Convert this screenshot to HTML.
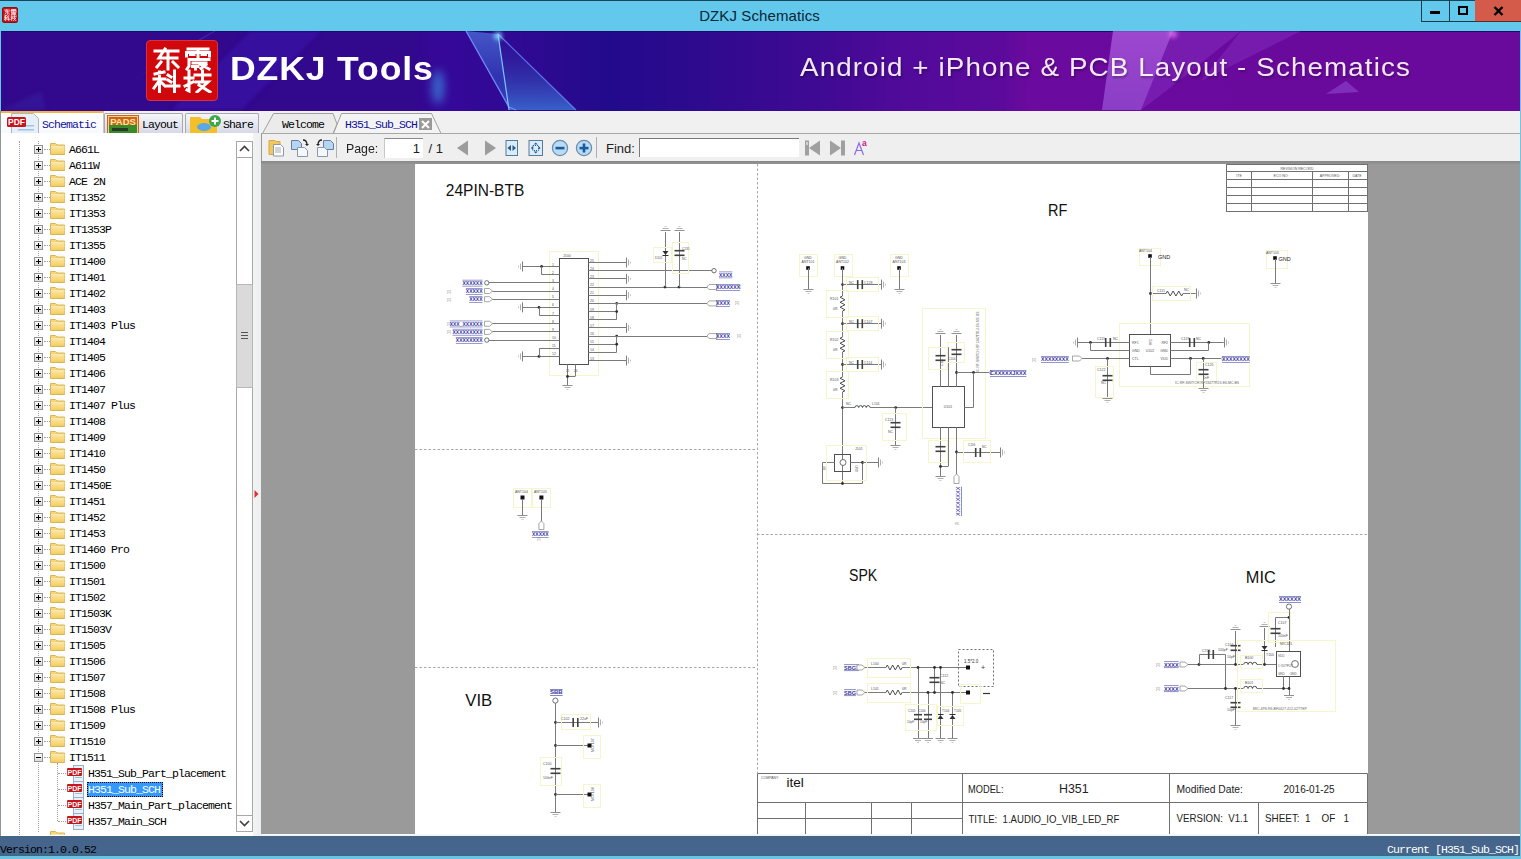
<!DOCTYPE html><html><head><meta charset="utf-8"><style>

*{box-sizing:border-box}
html,body{margin:0;padding:0}
body{width:1521px;height:859px;position:relative;overflow:hidden;background:#f0f0f0;font-family:"Liberation Sans",sans-serif}
.a{position:absolute}
.mono{font-family:"Liberation Mono",monospace}
.tt{font-family:"Liberation Mono",monospace;font-size:11.5px;letter-spacing:-0.9px;color:#000;line-height:14px;white-space:pre}
.bx{width:9px;height:9px;border:1px solid #929292;background:linear-gradient(#fafafa,#dcdcdc)}
.bx i{position:absolute;left:1px;top:3px;width:5px;height:1px;background:#000}
.bx b{position:absolute;left:3px;top:1px;width:1px;height:5px;background:#000}
.hd{width:6px;height:1px;border-top:1px dotted #a0a0a0}

</style></head><body>
<svg width="0" height="0" style="position:absolute"><defs><linearGradient id="fg" x1="0" y1="0" x2="0" y2="1"><stop offset="0" stop-color="#fbe9a8"/><stop offset="1" stop-color="#f2cd62"/></linearGradient></defs></svg>
<!-- TITLE BAR -->
<div class="a" style="left:0;top:0;width:1521px;height:31px;background:#62c8ec;border-top:1px solid #1a4556"></div>
<div class="a" style="left:2px;top:7px;width:16px;height:16px;background:#c8101a;border-radius:2px;border:1px solid #901010"></div>
<svg class="a" style="left:4px;top:9px" width="13" height="12" viewBox="0 0 62 46" preserveAspectRatio="none"><g fill="none" stroke="#fff" stroke-width="3" stroke-linecap="square" stroke-linejoin="miter">
    <g transform="translate(1,1)"><path d="M2 3H25M12 1L6 10H24M15 6V21M8 14L4 19M20 14L25 19"/></g>
    <g transform="translate(32,1)"><path d="M4 1H24M2.5 4.5V8M2.5 4.5H25.5V8M14 1V9.5M6.5 6.5H10M18 6.5H21.5M5 11.5H25M5 11.5V18L3 21M9 15H22M8.5 18.5H14M15 15.5L25 21M22 16.5L17 20.5M11.5 18.5V21"/></g>
    <g transform="translate(1,24)"><path d="M2 3L11 1M1 8H12M6.5 1V21M6 10L1 17M8 11L12 15M15 4L18 6M15 9L18 11M13 15H26M21.5 0V21"/></g>
    <g transform="translate(32,24)"><path d="M1 7H9M5 0V20L3 19M1 15L9 11M11 4H26M18.5 0V9M12 11H24L13 21M15 14L26 21"/></g>
  </g></svg>
<div class="a" style="left:-1px;top:7px;width:1521px;text-align:center;font-size:15px;color:#0c2636;line-height:18px;letter-spacing:0.1px">DZKJ Schematics</div>
<div class="a" style="left:1421px;top:0;width:29px;height:22px;border:1px solid #163a48;border-top:none;border-right:none"></div>
<div class="a" style="left:1449px;top:0;width:27px;height:22px;border:1px solid #163a48;border-top:none"></div>
<div class="a" style="left:1475px;top:0;width:46px;height:22px;background:#d45a4a;border-bottom:1px solid #5a2a22"></div>
<div class="a" style="left:1430px;top:11px;width:10px;height:3px;background:#000"></div>
<div class="a" style="left:1458px;top:6px;width:10px;height:9px;border:2px solid #000"></div>
<svg class="a" style="left:1493px;top:6px" width="11" height="10" viewBox="0 0 11 10"><path d="M1.5 1L9.5 9M9.5 1L1.5 9" stroke="#000" stroke-width="2.4"/></svg>

<!-- BANNER -->
<div class="a" style="left:1px;top:31px;width:1519px;height:80px;overflow:hidden;background:linear-gradient(90deg,#32088c 0%,#32088c 27%,#36089a 29%,#2c0a90 36%,#220a8c 40%,#2e0a8e 46%,#420a94 55%,#500a9a 59%,#5c0a9c 66%,#6a0a9e 67.5%,#6a0a9c 100%)">
  <div class="a" style="left:0;top:0;width:1519px;height:1px;background:#1e0a6a"></div>
  <svg class="a" style="left:0;top:0" width="1519" height="80" viewBox="0 0 1519 80">
    <defs>
      <filter id="bl2" x="-50%" y="-50%" width="200%" height="200%"><feGaussianBlur stdDeviation="2"/></filter>
      <filter id="bl5" x="-100%" y="-50%" width="300%" height="200%"><feGaussianBlur stdDeviation="5"/></filter>
      <linearGradient id="cg1" x1="0" y1="0" x2="0" y2="1"><stop offset="0" stop-color="#4a70d8"/><stop offset="0.6" stop-color="#3040b8"/><stop offset="1" stop-color="#3a50c8"/></linearGradient>
      <linearGradient id="cg2" x1="0" y1="0" x2="0" y2="1"><stop offset="0" stop-color="#2a1a98" stop-opacity="0.2"/><stop offset="1" stop-color="#3a6ad0"/></linearGradient>
      <linearGradient id="pg1" x1="0" y1="0" x2="0" y2="1"><stop offset="0" stop-color="#c070f0"/><stop offset="1" stop-color="#a060e0"/></linearGradient>
    </defs>
    <!-- faint streaks left -->
    <path d="M250 0 L320 0 L240 79 L170 79z" fill="#3a18b0" opacity="0.55" filter="url(#bl2)"/>
    <path d="M195 10 L213 0 L215 0 L130 50z" fill="#5a4ad0" opacity="0.4"/>
    <path d="M0 79 L40 60 L45 79z" fill="#3a30b0" opacity="0.3" filter="url(#bl2)"/>
    <!-- blue glow -->
    <ellipse cx="437" cy="56" rx="6" ry="17" fill="#3a8ae0" opacity="0.75" filter="url(#bl5)"/>
    <!-- blue crystal -->
    <path d="M465 0 L497 3 L508 78z" fill="url(#cg1)" opacity="0.75"/>
    <path d="M497 3 L508 79 L575 79z" fill="url(#cg2)" opacity="0.9"/>
    <path d="M465 0 L508 76 L515 79" fill="none" stroke="#7a90ff" stroke-width="1.3" opacity="0.9"/>
    <path d="M497 3 L508 79" stroke="#7ac8ff" stroke-width="1.2"/>
    <path d="M497 3 L575 79" stroke="#6a8aff" stroke-width="1.2" opacity="0.8"/>
    <circle cx="497" cy="5" r="4" fill="#8ae8ff" opacity="0.8" filter="url(#bl2)"/>
    <!-- purple crystal right -->
    <path d="M1112 0 L1172 0 L1140 79 L1101 79z" fill="url(#pg1)" opacity="0.6"/>
    <path d="M1172 0 L1240 0 L1165 60 L1140 79z" fill="#9040d0" opacity="0.35"/>
    <path d="M1240 0 L1300 0 L1200 50z" fill="#9a50e0" opacity="0.25"/>
    <path d="M1325 63 L1358 61 L1345 50z" fill="#9a5ae0" opacity="0.45"/>
    <circle cx="1172" cy="3" r="4" fill="#ff90ff" opacity="0.6" filter="url(#bl2)"/>
  </svg>
  <!-- logo -->
  <div class="a" style="left:145px;top:9px;width:72px;height:61px;background:#d0080c;border-radius:4px;border:1px solid #d83040"></div>
  <svg class="a" style="left:151px;top:16px" width="62" height="46" viewBox="0 0 62 46"><g fill="none" stroke="#fff" stroke-width="3" stroke-linecap="square" stroke-linejoin="miter">
    <g transform="translate(1,1)"><path d="M2 3H25M12 1L6 10H24M15 6V21M8 14L4 19M20 14L25 19"/></g>
    <g transform="translate(32,1)"><path d="M4 1H24M2.5 4.5V8M2.5 4.5H25.5V8M14 1V9.5M6.5 6.5H10M18 6.5H21.5M5 11.5H25M5 11.5V18L3 21M9 15H22M8.5 18.5H14M15 15.5L25 21M22 16.5L17 20.5M11.5 18.5V21"/></g>
    <g transform="translate(1,24)"><path d="M2 3L11 1M1 8H12M6.5 1V21M6 10L1 17M8 11L12 15M15 4L18 6M15 9L18 11M13 15H26M21.5 0V21"/></g>
    <g transform="translate(32,24)"><path d="M1 7H9M5 0V20L3 19M1 15L9 11M11 4H26M18.5 0V9M12 11H24L13 21M15 14L26 21"/></g>
  </g></svg>
  <div class="a" style="left:229px;top:18px;font-size:32.5px;font-weight:bold;color:#fff;letter-spacing:0.8px;line-height:40px;white-space:nowrap;transform:scaleX(1.094);transform-origin:0 0">DZKJ Tools</div>
  <div class="a" style="left:799px;top:21px;font-size:25px;color:rgba(255,250,255,0.93);letter-spacing:1px;line-height:30px;white-space:nowrap;text-shadow:1px 2px 2px rgba(0,0,0,0.3);transform:scaleX(1.111);transform-origin:0 0">Android + iPhone &amp; PCB Layout - Schematics</div>
</div>
<div class="a" style="left:0;top:31px;width:1px;height:80px;background:#62c8ec"></div>
<div class="a" style="left:1520px;top:31px;width:1px;height:80px;background:#62c8ec"></div>

<!-- TAB ROW -->
<div class="a" style="left:0;top:111px;width:1521px;height:22px;background:#f0f0f0;border-left:1px solid #62c8ec;border-right:1px solid #62c8ec"></div>
<!-- Schematic tab (active) -->
<div class="a" style="left:1px;top:111px;width:103px;height:24px;background:linear-gradient(#fff,#f7f8fc);border-top:2px solid #f3b443;border-right:1px solid #c8c8c8"></div>
<svg class="a" style="left:6px;top:112px" width="34" height="22" viewBox="0 0 34 22"><path d="M5.5 1.5 h22 l5 5 v15 h-27z" fill="#e6eef8" stroke="#a8b8cc"/><rect x="12" y="13" width="16" height="1.5" fill="#9cc4e8"/><rect x="12" y="17" width="16" height="1.5" fill="#9cc4e8"/><rect x="1" y="5" width="19" height="10" rx="1.5" fill="#c8141c"/><text x="10.5" y="13" font-family="Liberation Sans" font-size="8.5" font-weight="bold" fill="#fff" text-anchor="middle">PDF</text></svg>
<div class="a tt" style="left:42px;top:118px;color:#10109a">Schematic</div>
<!-- Layout tab -->
<div class="a" style="left:104px;top:113px;width:79px;height:20px;background:linear-gradient(#f6f6fa,#d6d9e8);border:1px solid #a8a8b0;border-bottom:none;border-radius:2px 2px 0 0"></div>
<svg class="a" style="left:107px;top:115px" width="32" height="18" viewBox="0 0 32 18"><rect x="0" y="0" width="32" height="18" fill="#d0621a"/><rect x="1.5" y="1.5" width="29" height="16" fill="none" stroke="#f0d090"/><rect x="2" y="10" width="28" height="8" fill="#3a8a2a"/><rect x="5" y="13" width="16" height="3" fill="#2a3a2a"/><text x="16" y="9.5" font-family="Liberation Sans" font-size="9.5" font-weight="bold" fill="#ffe8a0" text-anchor="middle">PADS</text></svg>
<div class="a tt" style="left:142px;top:118px">Layout</div>
<!-- Share tab -->
<div class="a" style="left:185px;top:113px;width:74px;height:20px;background:linear-gradient(#f6f6fa,#d6d9e8);border:1px solid #a8a8b0;border-bottom:none;border-radius:2px 2px 0 0"></div>
<svg class="a" style="left:189px;top:114px" width="34" height="19" viewBox="0 0 34 19"><path d="M1 3h10l2 2h15v14H1z" fill="#f5bf2a"/><ellipse cx="15" cy="13" rx="7" ry="4" fill="#5aa8e8"/><circle cx="26" cy="7" r="6" fill="#3aa84a"/><path d="M26 3.5v7M22.5 7h7" stroke="#fff" stroke-width="2"/></svg>
<div class="a tt" style="left:223px;top:118px">Share</div>
<!-- doc tabs -->
<svg class="a" style="left:261px;top:111px" width="200" height="23" viewBox="0 0 200 23">
  <path d="M1.5 22.5 L12.5 2.5 H72 L76 13 L72 22.5z" fill="#ebebeb" stroke="#a0a0a0"/>
  <path d="M72.5 22.5 L80.5 2.5 H170.5 L180 22.5" fill="#f4f4f4" stroke="#a0a0a0"/>
  <path d="M0 22.5 H1.5 M180 22.5 H200" stroke="#a0a0a0"/>
  <rect x="158" y="7" width="13" height="12" fill="#9a9a9a"/>
  <path d="M161 10L168 17M168 10L161 17" stroke="#fff" stroke-width="2"/>
</svg>
<div class="a tt" style="left:282px;top:118px">Welcome</div>
<div class="a tt" style="left:345px;top:118px;color:#10109a">H351_Sub_SCH</div>

<div class="a" style="left:0;top:133px;width:261px;height:703px;background:#fff;border-left:1px solid #8d8d8d"></div>
<div class="a" style="left:0;top:0;width:236px;height:835px;overflow:hidden;clip-path:inset(136px 0 0 0)">
<div class="a" style="left:19px;top:141px;width:1px;height:694px;border-left:1px dotted #a0a0a0"></div>
<div class="a" style="left:38px;top:141px;width:1px;height:691px;border-left:1px dotted #a0a0a0"></div>
<div class="a bx" style="left:34px;top:145px"><i></i><b></b></div>
<div class="a hd" style="left:44px;top:149px"></div>
<svg class="a" style="left:50px;top:142px" width="16" height="13" viewBox="0 0 16 13"><path d="M0.5 1.5 h5 l1.5 1.5 h7.5 v9.5 h-14z" fill="#f3d77a" stroke="#d9b45a" stroke-width="1"/><rect x="1" y="4" width="13.5" height="8" fill="url(#fg)"/></svg>
<div class="a tt" style="left:69px;top:143px">A661L</div>
<div class="a bx" style="left:34px;top:161px"><i></i><b></b></div>
<div class="a hd" style="left:44px;top:165px"></div>
<svg class="a" style="left:50px;top:158px" width="16" height="13" viewBox="0 0 16 13"><path d="M0.5 1.5 h5 l1.5 1.5 h7.5 v9.5 h-14z" fill="#f3d77a" stroke="#d9b45a" stroke-width="1"/><rect x="1" y="4" width="13.5" height="8" fill="url(#fg)"/></svg>
<div class="a tt" style="left:69px;top:159px">A611W</div>
<div class="a bx" style="left:34px;top:177px"><i></i><b></b></div>
<div class="a hd" style="left:44px;top:181px"></div>
<svg class="a" style="left:50px;top:174px" width="16" height="13" viewBox="0 0 16 13"><path d="M0.5 1.5 h5 l1.5 1.5 h7.5 v9.5 h-14z" fill="#f3d77a" stroke="#d9b45a" stroke-width="1"/><rect x="1" y="4" width="13.5" height="8" fill="url(#fg)"/></svg>
<div class="a tt" style="left:69px;top:175px">ACE 2N</div>
<div class="a bx" style="left:34px;top:193px"><i></i><b></b></div>
<div class="a hd" style="left:44px;top:197px"></div>
<svg class="a" style="left:50px;top:190px" width="16" height="13" viewBox="0 0 16 13"><path d="M0.5 1.5 h5 l1.5 1.5 h7.5 v9.5 h-14z" fill="#f3d77a" stroke="#d9b45a" stroke-width="1"/><rect x="1" y="4" width="13.5" height="8" fill="url(#fg)"/></svg>
<div class="a tt" style="left:69px;top:191px">IT1352</div>
<div class="a bx" style="left:34px;top:209px"><i></i><b></b></div>
<div class="a hd" style="left:44px;top:213px"></div>
<svg class="a" style="left:50px;top:206px" width="16" height="13" viewBox="0 0 16 13"><path d="M0.5 1.5 h5 l1.5 1.5 h7.5 v9.5 h-14z" fill="#f3d77a" stroke="#d9b45a" stroke-width="1"/><rect x="1" y="4" width="13.5" height="8" fill="url(#fg)"/></svg>
<div class="a tt" style="left:69px;top:207px">IT1353</div>
<div class="a bx" style="left:34px;top:225px"><i></i><b></b></div>
<div class="a hd" style="left:44px;top:229px"></div>
<svg class="a" style="left:50px;top:222px" width="16" height="13" viewBox="0 0 16 13"><path d="M0.5 1.5 h5 l1.5 1.5 h7.5 v9.5 h-14z" fill="#f3d77a" stroke="#d9b45a" stroke-width="1"/><rect x="1" y="4" width="13.5" height="8" fill="url(#fg)"/></svg>
<div class="a tt" style="left:69px;top:223px">IT1353P</div>
<div class="a bx" style="left:34px;top:241px"><i></i><b></b></div>
<div class="a hd" style="left:44px;top:245px"></div>
<svg class="a" style="left:50px;top:238px" width="16" height="13" viewBox="0 0 16 13"><path d="M0.5 1.5 h5 l1.5 1.5 h7.5 v9.5 h-14z" fill="#f3d77a" stroke="#d9b45a" stroke-width="1"/><rect x="1" y="4" width="13.5" height="8" fill="url(#fg)"/></svg>
<div class="a tt" style="left:69px;top:239px">IT1355</div>
<div class="a bx" style="left:34px;top:257px"><i></i><b></b></div>
<div class="a hd" style="left:44px;top:261px"></div>
<svg class="a" style="left:50px;top:254px" width="16" height="13" viewBox="0 0 16 13"><path d="M0.5 1.5 h5 l1.5 1.5 h7.5 v9.5 h-14z" fill="#f3d77a" stroke="#d9b45a" stroke-width="1"/><rect x="1" y="4" width="13.5" height="8" fill="url(#fg)"/></svg>
<div class="a tt" style="left:69px;top:255px">IT1400</div>
<div class="a bx" style="left:34px;top:273px"><i></i><b></b></div>
<div class="a hd" style="left:44px;top:277px"></div>
<svg class="a" style="left:50px;top:270px" width="16" height="13" viewBox="0 0 16 13"><path d="M0.5 1.5 h5 l1.5 1.5 h7.5 v9.5 h-14z" fill="#f3d77a" stroke="#d9b45a" stroke-width="1"/><rect x="1" y="4" width="13.5" height="8" fill="url(#fg)"/></svg>
<div class="a tt" style="left:69px;top:271px">IT1401</div>
<div class="a bx" style="left:34px;top:289px"><i></i><b></b></div>
<div class="a hd" style="left:44px;top:293px"></div>
<svg class="a" style="left:50px;top:286px" width="16" height="13" viewBox="0 0 16 13"><path d="M0.5 1.5 h5 l1.5 1.5 h7.5 v9.5 h-14z" fill="#f3d77a" stroke="#d9b45a" stroke-width="1"/><rect x="1" y="4" width="13.5" height="8" fill="url(#fg)"/></svg>
<div class="a tt" style="left:69px;top:287px">IT1402</div>
<div class="a bx" style="left:34px;top:305px"><i></i><b></b></div>
<div class="a hd" style="left:44px;top:309px"></div>
<svg class="a" style="left:50px;top:302px" width="16" height="13" viewBox="0 0 16 13"><path d="M0.5 1.5 h5 l1.5 1.5 h7.5 v9.5 h-14z" fill="#f3d77a" stroke="#d9b45a" stroke-width="1"/><rect x="1" y="4" width="13.5" height="8" fill="url(#fg)"/></svg>
<div class="a tt" style="left:69px;top:303px">IT1403</div>
<div class="a bx" style="left:34px;top:321px"><i></i><b></b></div>
<div class="a hd" style="left:44px;top:325px"></div>
<svg class="a" style="left:50px;top:318px" width="16" height="13" viewBox="0 0 16 13"><path d="M0.5 1.5 h5 l1.5 1.5 h7.5 v9.5 h-14z" fill="#f3d77a" stroke="#d9b45a" stroke-width="1"/><rect x="1" y="4" width="13.5" height="8" fill="url(#fg)"/></svg>
<div class="a tt" style="left:69px;top:319px">IT1403 Plus</div>
<div class="a bx" style="left:34px;top:337px"><i></i><b></b></div>
<div class="a hd" style="left:44px;top:341px"></div>
<svg class="a" style="left:50px;top:334px" width="16" height="13" viewBox="0 0 16 13"><path d="M0.5 1.5 h5 l1.5 1.5 h7.5 v9.5 h-14z" fill="#f3d77a" stroke="#d9b45a" stroke-width="1"/><rect x="1" y="4" width="13.5" height="8" fill="url(#fg)"/></svg>
<div class="a tt" style="left:69px;top:335px">IT1404</div>
<div class="a bx" style="left:34px;top:353px"><i></i><b></b></div>
<div class="a hd" style="left:44px;top:357px"></div>
<svg class="a" style="left:50px;top:350px" width="16" height="13" viewBox="0 0 16 13"><path d="M0.5 1.5 h5 l1.5 1.5 h7.5 v9.5 h-14z" fill="#f3d77a" stroke="#d9b45a" stroke-width="1"/><rect x="1" y="4" width="13.5" height="8" fill="url(#fg)"/></svg>
<div class="a tt" style="left:69px;top:351px">IT1405</div>
<div class="a bx" style="left:34px;top:369px"><i></i><b></b></div>
<div class="a hd" style="left:44px;top:373px"></div>
<svg class="a" style="left:50px;top:366px" width="16" height="13" viewBox="0 0 16 13"><path d="M0.5 1.5 h5 l1.5 1.5 h7.5 v9.5 h-14z" fill="#f3d77a" stroke="#d9b45a" stroke-width="1"/><rect x="1" y="4" width="13.5" height="8" fill="url(#fg)"/></svg>
<div class="a tt" style="left:69px;top:367px">IT1406</div>
<div class="a bx" style="left:34px;top:385px"><i></i><b></b></div>
<div class="a hd" style="left:44px;top:389px"></div>
<svg class="a" style="left:50px;top:382px" width="16" height="13" viewBox="0 0 16 13"><path d="M0.5 1.5 h5 l1.5 1.5 h7.5 v9.5 h-14z" fill="#f3d77a" stroke="#d9b45a" stroke-width="1"/><rect x="1" y="4" width="13.5" height="8" fill="url(#fg)"/></svg>
<div class="a tt" style="left:69px;top:383px">IT1407</div>
<div class="a bx" style="left:34px;top:401px"><i></i><b></b></div>
<div class="a hd" style="left:44px;top:405px"></div>
<svg class="a" style="left:50px;top:398px" width="16" height="13" viewBox="0 0 16 13"><path d="M0.5 1.5 h5 l1.5 1.5 h7.5 v9.5 h-14z" fill="#f3d77a" stroke="#d9b45a" stroke-width="1"/><rect x="1" y="4" width="13.5" height="8" fill="url(#fg)"/></svg>
<div class="a tt" style="left:69px;top:399px">IT1407 Plus</div>
<div class="a bx" style="left:34px;top:417px"><i></i><b></b></div>
<div class="a hd" style="left:44px;top:421px"></div>
<svg class="a" style="left:50px;top:414px" width="16" height="13" viewBox="0 0 16 13"><path d="M0.5 1.5 h5 l1.5 1.5 h7.5 v9.5 h-14z" fill="#f3d77a" stroke="#d9b45a" stroke-width="1"/><rect x="1" y="4" width="13.5" height="8" fill="url(#fg)"/></svg>
<div class="a tt" style="left:69px;top:415px">IT1408</div>
<div class="a bx" style="left:34px;top:433px"><i></i><b></b></div>
<div class="a hd" style="left:44px;top:437px"></div>
<svg class="a" style="left:50px;top:430px" width="16" height="13" viewBox="0 0 16 13"><path d="M0.5 1.5 h5 l1.5 1.5 h7.5 v9.5 h-14z" fill="#f3d77a" stroke="#d9b45a" stroke-width="1"/><rect x="1" y="4" width="13.5" height="8" fill="url(#fg)"/></svg>
<div class="a tt" style="left:69px;top:431px">IT1409</div>
<div class="a bx" style="left:34px;top:449px"><i></i><b></b></div>
<div class="a hd" style="left:44px;top:453px"></div>
<svg class="a" style="left:50px;top:446px" width="16" height="13" viewBox="0 0 16 13"><path d="M0.5 1.5 h5 l1.5 1.5 h7.5 v9.5 h-14z" fill="#f3d77a" stroke="#d9b45a" stroke-width="1"/><rect x="1" y="4" width="13.5" height="8" fill="url(#fg)"/></svg>
<div class="a tt" style="left:69px;top:447px">IT1410</div>
<div class="a bx" style="left:34px;top:465px"><i></i><b></b></div>
<div class="a hd" style="left:44px;top:469px"></div>
<svg class="a" style="left:50px;top:462px" width="16" height="13" viewBox="0 0 16 13"><path d="M0.5 1.5 h5 l1.5 1.5 h7.5 v9.5 h-14z" fill="#f3d77a" stroke="#d9b45a" stroke-width="1"/><rect x="1" y="4" width="13.5" height="8" fill="url(#fg)"/></svg>
<div class="a tt" style="left:69px;top:463px">IT1450</div>
<div class="a bx" style="left:34px;top:481px"><i></i><b></b></div>
<div class="a hd" style="left:44px;top:485px"></div>
<svg class="a" style="left:50px;top:478px" width="16" height="13" viewBox="0 0 16 13"><path d="M0.5 1.5 h5 l1.5 1.5 h7.5 v9.5 h-14z" fill="#f3d77a" stroke="#d9b45a" stroke-width="1"/><rect x="1" y="4" width="13.5" height="8" fill="url(#fg)"/></svg>
<div class="a tt" style="left:69px;top:479px">IT1450E</div>
<div class="a bx" style="left:34px;top:497px"><i></i><b></b></div>
<div class="a hd" style="left:44px;top:501px"></div>
<svg class="a" style="left:50px;top:494px" width="16" height="13" viewBox="0 0 16 13"><path d="M0.5 1.5 h5 l1.5 1.5 h7.5 v9.5 h-14z" fill="#f3d77a" stroke="#d9b45a" stroke-width="1"/><rect x="1" y="4" width="13.5" height="8" fill="url(#fg)"/></svg>
<div class="a tt" style="left:69px;top:495px">IT1451</div>
<div class="a bx" style="left:34px;top:513px"><i></i><b></b></div>
<div class="a hd" style="left:44px;top:517px"></div>
<svg class="a" style="left:50px;top:510px" width="16" height="13" viewBox="0 0 16 13"><path d="M0.5 1.5 h5 l1.5 1.5 h7.5 v9.5 h-14z" fill="#f3d77a" stroke="#d9b45a" stroke-width="1"/><rect x="1" y="4" width="13.5" height="8" fill="url(#fg)"/></svg>
<div class="a tt" style="left:69px;top:511px">IT1452</div>
<div class="a bx" style="left:34px;top:529px"><i></i><b></b></div>
<div class="a hd" style="left:44px;top:533px"></div>
<svg class="a" style="left:50px;top:526px" width="16" height="13" viewBox="0 0 16 13"><path d="M0.5 1.5 h5 l1.5 1.5 h7.5 v9.5 h-14z" fill="#f3d77a" stroke="#d9b45a" stroke-width="1"/><rect x="1" y="4" width="13.5" height="8" fill="url(#fg)"/></svg>
<div class="a tt" style="left:69px;top:527px">IT1453</div>
<div class="a bx" style="left:34px;top:545px"><i></i><b></b></div>
<div class="a hd" style="left:44px;top:549px"></div>
<svg class="a" style="left:50px;top:542px" width="16" height="13" viewBox="0 0 16 13"><path d="M0.5 1.5 h5 l1.5 1.5 h7.5 v9.5 h-14z" fill="#f3d77a" stroke="#d9b45a" stroke-width="1"/><rect x="1" y="4" width="13.5" height="8" fill="url(#fg)"/></svg>
<div class="a tt" style="left:69px;top:543px">IT1460 Pro</div>
<div class="a bx" style="left:34px;top:561px"><i></i><b></b></div>
<div class="a hd" style="left:44px;top:565px"></div>
<svg class="a" style="left:50px;top:558px" width="16" height="13" viewBox="0 0 16 13"><path d="M0.5 1.5 h5 l1.5 1.5 h7.5 v9.5 h-14z" fill="#f3d77a" stroke="#d9b45a" stroke-width="1"/><rect x="1" y="4" width="13.5" height="8" fill="url(#fg)"/></svg>
<div class="a tt" style="left:69px;top:559px">IT1500</div>
<div class="a bx" style="left:34px;top:577px"><i></i><b></b></div>
<div class="a hd" style="left:44px;top:581px"></div>
<svg class="a" style="left:50px;top:574px" width="16" height="13" viewBox="0 0 16 13"><path d="M0.5 1.5 h5 l1.5 1.5 h7.5 v9.5 h-14z" fill="#f3d77a" stroke="#d9b45a" stroke-width="1"/><rect x="1" y="4" width="13.5" height="8" fill="url(#fg)"/></svg>
<div class="a tt" style="left:69px;top:575px">IT1501</div>
<div class="a bx" style="left:34px;top:593px"><i></i><b></b></div>
<div class="a hd" style="left:44px;top:597px"></div>
<svg class="a" style="left:50px;top:590px" width="16" height="13" viewBox="0 0 16 13"><path d="M0.5 1.5 h5 l1.5 1.5 h7.5 v9.5 h-14z" fill="#f3d77a" stroke="#d9b45a" stroke-width="1"/><rect x="1" y="4" width="13.5" height="8" fill="url(#fg)"/></svg>
<div class="a tt" style="left:69px;top:591px">IT1502</div>
<div class="a bx" style="left:34px;top:609px"><i></i><b></b></div>
<div class="a hd" style="left:44px;top:613px"></div>
<svg class="a" style="left:50px;top:606px" width="16" height="13" viewBox="0 0 16 13"><path d="M0.5 1.5 h5 l1.5 1.5 h7.5 v9.5 h-14z" fill="#f3d77a" stroke="#d9b45a" stroke-width="1"/><rect x="1" y="4" width="13.5" height="8" fill="url(#fg)"/></svg>
<div class="a tt" style="left:69px;top:607px">IT1503K</div>
<div class="a bx" style="left:34px;top:625px"><i></i><b></b></div>
<div class="a hd" style="left:44px;top:629px"></div>
<svg class="a" style="left:50px;top:622px" width="16" height="13" viewBox="0 0 16 13"><path d="M0.5 1.5 h5 l1.5 1.5 h7.5 v9.5 h-14z" fill="#f3d77a" stroke="#d9b45a" stroke-width="1"/><rect x="1" y="4" width="13.5" height="8" fill="url(#fg)"/></svg>
<div class="a tt" style="left:69px;top:623px">IT1503V</div>
<div class="a bx" style="left:34px;top:641px"><i></i><b></b></div>
<div class="a hd" style="left:44px;top:645px"></div>
<svg class="a" style="left:50px;top:638px" width="16" height="13" viewBox="0 0 16 13"><path d="M0.5 1.5 h5 l1.5 1.5 h7.5 v9.5 h-14z" fill="#f3d77a" stroke="#d9b45a" stroke-width="1"/><rect x="1" y="4" width="13.5" height="8" fill="url(#fg)"/></svg>
<div class="a tt" style="left:69px;top:639px">IT1505</div>
<div class="a bx" style="left:34px;top:657px"><i></i><b></b></div>
<div class="a hd" style="left:44px;top:661px"></div>
<svg class="a" style="left:50px;top:654px" width="16" height="13" viewBox="0 0 16 13"><path d="M0.5 1.5 h5 l1.5 1.5 h7.5 v9.5 h-14z" fill="#f3d77a" stroke="#d9b45a" stroke-width="1"/><rect x="1" y="4" width="13.5" height="8" fill="url(#fg)"/></svg>
<div class="a tt" style="left:69px;top:655px">IT1506</div>
<div class="a bx" style="left:34px;top:673px"><i></i><b></b></div>
<div class="a hd" style="left:44px;top:677px"></div>
<svg class="a" style="left:50px;top:670px" width="16" height="13" viewBox="0 0 16 13"><path d="M0.5 1.5 h5 l1.5 1.5 h7.5 v9.5 h-14z" fill="#f3d77a" stroke="#d9b45a" stroke-width="1"/><rect x="1" y="4" width="13.5" height="8" fill="url(#fg)"/></svg>
<div class="a tt" style="left:69px;top:671px">IT1507</div>
<div class="a bx" style="left:34px;top:689px"><i></i><b></b></div>
<div class="a hd" style="left:44px;top:693px"></div>
<svg class="a" style="left:50px;top:686px" width="16" height="13" viewBox="0 0 16 13"><path d="M0.5 1.5 h5 l1.5 1.5 h7.5 v9.5 h-14z" fill="#f3d77a" stroke="#d9b45a" stroke-width="1"/><rect x="1" y="4" width="13.5" height="8" fill="url(#fg)"/></svg>
<div class="a tt" style="left:69px;top:687px">IT1508</div>
<div class="a bx" style="left:34px;top:705px"><i></i><b></b></div>
<div class="a hd" style="left:44px;top:709px"></div>
<svg class="a" style="left:50px;top:702px" width="16" height="13" viewBox="0 0 16 13"><path d="M0.5 1.5 h5 l1.5 1.5 h7.5 v9.5 h-14z" fill="#f3d77a" stroke="#d9b45a" stroke-width="1"/><rect x="1" y="4" width="13.5" height="8" fill="url(#fg)"/></svg>
<div class="a tt" style="left:69px;top:703px">IT1508 Plus</div>
<div class="a bx" style="left:34px;top:721px"><i></i><b></b></div>
<div class="a hd" style="left:44px;top:725px"></div>
<svg class="a" style="left:50px;top:718px" width="16" height="13" viewBox="0 0 16 13"><path d="M0.5 1.5 h5 l1.5 1.5 h7.5 v9.5 h-14z" fill="#f3d77a" stroke="#d9b45a" stroke-width="1"/><rect x="1" y="4" width="13.5" height="8" fill="url(#fg)"/></svg>
<div class="a tt" style="left:69px;top:719px">IT1509</div>
<div class="a bx" style="left:34px;top:737px"><i></i><b></b></div>
<div class="a hd" style="left:44px;top:741px"></div>
<svg class="a" style="left:50px;top:734px" width="16" height="13" viewBox="0 0 16 13"><path d="M0.5 1.5 h5 l1.5 1.5 h7.5 v9.5 h-14z" fill="#f3d77a" stroke="#d9b45a" stroke-width="1"/><rect x="1" y="4" width="13.5" height="8" fill="url(#fg)"/></svg>
<div class="a tt" style="left:69px;top:735px">IT1510</div>
<div class="a bx" style="left:34px;top:753px"><i></i></div>
<div class="a hd" style="left:44px;top:757px"></div>
<svg class="a" style="left:50px;top:750px" width="16" height="13" viewBox="0 0 16 13"><path d="M0.5 1.5 h5 l1.5 1.5 h7.5 v9.5 h-14z" fill="#f3d77a" stroke="#d9b45a" stroke-width="1"/><rect x="1" y="4" width="13.5" height="8" fill="url(#fg)"/></svg>
<div class="a tt" style="left:69px;top:751px">IT1511</div>
<div class="a" style="left:57px;top:763px;width:1px;height:58px;border-left:1px dotted #a0a0a0"></div>
<div class="a hd" style="left:58px;top:773px;width:10px"></div>
<svg class="a" style="left:67px;top:765px" width="20" height="17" viewBox="0 0 20 17"><rect x="6.5" y="0.5" width="10" height="16" fill="#e8f0f8" stroke="#9ab0c8"/><rect x="8" y="9" width="7" height="1" fill="#9cc0e0"/><rect x="8" y="12" width="7" height="1" fill="#9cc0e0"/><rect x="0" y="3" width="15" height="8" rx="1" fill="#c8141c"/><text x="7.5" y="9.6" font-family="Liberation Sans" font-size="7" font-weight="bold" fill="#fff" text-anchor="middle">PDF</text></svg>
<div class="a tt" style="left:88px;top:767px">H351_Sub_Part_placement</div>
<div class="a hd" style="left:58px;top:789px;width:10px"></div>
<svg class="a" style="left:67px;top:781px" width="20" height="17" viewBox="0 0 20 17"><rect x="6.5" y="0.5" width="10" height="16" fill="#e8f0f8" stroke="#9ab0c8"/><rect x="8" y="9" width="7" height="1" fill="#9cc0e0"/><rect x="8" y="12" width="7" height="1" fill="#9cc0e0"/><rect x="0" y="3" width="15" height="8" rx="1" fill="#c8141c"/><text x="7.5" y="9.6" font-family="Liberation Sans" font-size="7" font-weight="bold" fill="#fff" text-anchor="middle">PDF</text></svg>
<div class="a" style="left:87px;top:782px;width:76px;height:15px;background:#3399ff;border:1px dotted #000"></div>
<div class="a tt" style="left:88px;top:783px;color:#fff">H351_Sub_SCH</div>
<div class="a hd" style="left:58px;top:805px;width:10px"></div>
<svg class="a" style="left:67px;top:797px" width="20" height="17" viewBox="0 0 20 17"><rect x="6.5" y="0.5" width="10" height="16" fill="#e8f0f8" stroke="#9ab0c8"/><rect x="8" y="9" width="7" height="1" fill="#9cc0e0"/><rect x="8" y="12" width="7" height="1" fill="#9cc0e0"/><rect x="0" y="3" width="15" height="8" rx="1" fill="#c8141c"/><text x="7.5" y="9.6" font-family="Liberation Sans" font-size="7" font-weight="bold" fill="#fff" text-anchor="middle">PDF</text></svg>
<div class="a tt" style="left:88px;top:799px">H357_Main_Part_placement</div>
<div class="a hd" style="left:58px;top:821px;width:10px"></div>
<svg class="a" style="left:67px;top:813px" width="20" height="17" viewBox="0 0 20 17"><rect x="6.5" y="0.5" width="10" height="16" fill="#e8f0f8" stroke="#9ab0c8"/><rect x="8" y="9" width="7" height="1" fill="#9cc0e0"/><rect x="8" y="12" width="7" height="1" fill="#9cc0e0"/><rect x="0" y="3" width="15" height="8" rx="1" fill="#c8141c"/><text x="7.5" y="9.6" font-family="Liberation Sans" font-size="7" font-weight="bold" fill="#fff" text-anchor="middle">PDF</text></svg>
<div class="a tt" style="left:88px;top:815px">H357_Main_SCH</div>
<svg class="a" style="left:50px;top:830px" width="16" height="13" viewBox="0 0 16 13"><path d="M0.5 1.5 h5 l1.5 1.5 h7.5 v9.5 h-14z" fill="#f3d77a" stroke="#d9b45a" stroke-width="1"/><rect x="1" y="4" width="13.5" height="8" fill="url(#fg)"/></svg>
</div>
<!-- left panel scrollbar -->
<div class="a" style="left:236px;top:141px;width:17px;height:691px;background:#fff;border:1px solid #a8a8a8"></div>
<div class="a" style="left:236px;top:141px;width:17px;height:17px;border-bottom:1px solid #a8a8a8"></div>
<svg class="a" style="left:238px;top:144px" width="13" height="10" viewBox="0 0 13 10"><path d="M2 7L6.5 2.5L11 7" fill="none" stroke="#404040" stroke-width="1.6"/></svg>
<div class="a" style="left:236px;top:284px;width:17px;height:104px;background:#dadada;border:1px solid #b8b8b8"></div>
<div class="a" style="left:241px;top:332px;width:7px;height:1px;background:#555"></div>
<div class="a" style="left:241px;top:335px;width:7px;height:1px;background:#555"></div>
<div class="a" style="left:241px;top:338px;width:7px;height:1px;background:#555"></div>
<div class="a" style="left:236px;top:815px;width:17px;height:17px;border-top:1px solid #a8a8a8"></div>
<svg class="a" style="left:238px;top:818px" width="13" height="10" viewBox="0 0 13 10"><path d="M2 3L6.5 7.5L11 3" fill="none" stroke="#404040" stroke-width="1.6"/></svg>
<!-- splitter strip -->
<div class="a" style="left:253px;top:133px;width:8px;height:703px;background:linear-gradient(90deg,#f2f3f4,#eceef0)"></div>
<svg class="a" style="left:254px;top:489px" width="5" height="10" viewBox="0 0 5 10"><path d="M0.5 1L4.5 5L0.5 9z" fill="#e03030"/></svg>

<!-- doc toolbar -->
<div class="a" style="left:261px;top:133px;width:1260px;height:28px;background:#efeff0;border-left:1px solid #9a9a9a;border-top:1px solid #a8a8a8"></div>
<!-- icons -->
<svg class="a" style="left:268px;top:139px" width="18" height="18" viewBox="0 0 18 18"><path d="M1 1.5h6l1 1h4v13H1z" fill="#f0c860" stroke="#d8a840"/><path d="M5.5 5.5h7l3 3v8.5h-10z" fill="#fff" stroke="#8898b0"/><path d="M7 9h6M7 11h6M7 13h6" stroke="#a0aab8"/></svg>
<svg class="a" style="left:291px;top:138px" width="19" height="19" viewBox="0 0 19 19"><path d="M0.5 2.5h7l3 3v6h-10z" fill="#b8d4f0" stroke="#6080a8"/><path d="M6.5 9.5h7l3 3v6h-10z" fill="#f4f8fc" stroke="#8898b0"/><path d="M12 2 q4 0 4 5" fill="none" stroke="#202020" stroke-width="1.3"/><path d="M14 6l2 2 2-2" fill="#202020"/></svg>
<svg class="a" style="left:315px;top:138px" width="19" height="19" viewBox="0 0 19 19"><path d="M8.5 2.5h7l3 3v6h-10z" fill="#b8d4f0" stroke="#6080a8"/><path d="M2.5 9.5h7l3 3v6h-10z" fill="#f4f8fc" stroke="#8898b0"/><path d="M7 2 q-4 0 -4 5" fill="none" stroke="#202020" stroke-width="1.3"/><path d="M1 6l2 2 2-2" fill="#202020"/></svg>
<div class="a" style="left:336px;top:137px;width:1px;height:21px;background:#b0b0b0"></div>
<div class="a" style="left:346px;top:140px;font-size:13px;color:#222;line-height:18px;transform:scaleX(0.95);transform-origin:0 0">Page:</div>
<div class="a" style="left:384px;top:138px;width:39px;height:20px;background:#fff;border-top:1px solid #8a8a8a;border-left:1px solid #c8c8c8"></div>
<div class="a" style="left:384px;top:140px;width:36px;text-align:right;font-size:13px;color:#222;line-height:18px">1</div>
<div class="a" style="left:428.5px;top:140px;font-size:13px;color:#222;line-height:18px">/ 1</div>
<svg class="a" style="left:456px;top:139px" width="14" height="18" viewBox="0 0 14 18"><path d="M12 1.5V16.5L1 9z" fill="#9c9c9c"/></svg>
<svg class="a" style="left:483px;top:139px" width="14" height="18" viewBox="0 0 14 18"><path d="M2 1.5V16.5L13 9z" fill="#9c9c9c"/></svg>
<svg class="a" style="left:505px;top:139px" width="14" height="18" viewBox="0 0 14 18"><rect x="1" y="1.5" width="11.5" height="15" fill="#d8ecfa" stroke="#5a7a9a"/><path d="M2.5 9L6 6v6zM11 9L7.5 6v6z" fill="#2a5a8a"/></svg>
<svg class="a" style="left:528px;top:139px" width="16" height="18" viewBox="0 0 16 18"><rect x="1" y="1.5" width="13.5" height="15" fill="#d8ecfa" stroke="#5a7a9a"/><path d="M7.75 3.5l2 2h-4zM7.75 14.5l2-2h-4zM3 9l2 2v-4zM12.5 9l-2 2v-4z" fill="#2a5a8a"/><rect x="5" y="6.5" width="5.5" height="5" fill="none" stroke="#2a5a8a" stroke-dasharray="1 1"/></svg>
<svg class="a" style="left:551px;top:139px" width="18" height="18" viewBox="0 0 18 18"><circle cx="9" cy="9" r="7.6" fill="#b8dcf6" stroke="#6a8aa8" stroke-width="1.2"/><rect x="4.5" y="7.8" width="9" height="2.6" fill="#1a5aa0"/></svg>
<svg class="a" style="left:575px;top:139px" width="18" height="18" viewBox="0 0 18 18"><circle cx="9" cy="9" r="7.6" fill="#b8dcf6" stroke="#6a8aa8" stroke-width="1.2"/><rect x="4.5" y="7.8" width="9" height="2.6" fill="#1a5aa0"/><rect x="7.7" y="4.5" width="2.6" height="9" fill="#1a5aa0"/></svg>
<div class="a" style="left:596px;top:137px;width:1px;height:21px;background:#b0b0b0"></div>
<div class="a" style="left:606px;top:140px;font-size:13px;color:#222;line-height:18px">Find:</div>
<div class="a" style="left:639px;top:138px;width:160px;height:19px;background:#fff;border-top:1px solid #7a7a7a;border-left:1px solid #7a7a7a"></div>
<svg class="a" style="left:804px;top:139px" width="17" height="18" viewBox="0 0 17 18"><path d="M1 1.5h4v15H1zM5 9L16 1.5v15z" fill="#a0a0a0"/><path d="M3 3v3" stroke="#fff" stroke-width="1"/></svg>
<svg class="a" style="left:829px;top:139px" width="17" height="18" viewBox="0 0 17 18"><path d="M16 1.5h-4v15h4zM12 9L1 1.5v15z" fill="#a0a0a0"/></svg>
<svg class="a" style="left:853px;top:138px" width="16" height="19" viewBox="0 0 16 19"><path d="M1.5 17L6 5l4.5 12M3.2 12.5h5.6" fill="none" stroke="#8a6ae8" stroke-width="1.2"/><text x="9" y="8" font-family="Liberation Sans" font-size="8.5" font-weight="bold" fill="#d02080">a</text></svg>



<div class="a" style="left:261px;top:161px;width:1260px;height:673px;background:#9a9a9a"></div>
<div class="a" style="left:261px;top:161px;width:1260px;height:3px;background:linear-gradient(#888,#8e8e8e 60%,#959595)"></div>
<div class="a" style="left:262px;top:834px;width:1259px;height:2px;background:linear-gradient(#fbfbfd,#e6f2fb)"></div>
<div class="a" style="left:415px;top:164px;width:953px;height:670px;background:#fff"></div>

<div class="a" style="left:415px;top:164px;width:953px;height:670px;overflow:hidden"><div class="a" style="left:-415px;top:-164px;width:1521px;height:859px"><svg class="a" style="left:0;top:0" width="1521" height="859" viewBox="0 0 1521 859"><line x1="757.5" y1="164" x2="757.5" y2="773" stroke="#a8a8a8" stroke-width="1" stroke-dasharray="2.5 2"/>
<line x1="415" y1="449.5" x2="757" y2="449.5" stroke="#a8a8a8" stroke-width="1" stroke-dasharray="2.5 2"/>
<line x1="415" y1="667.5" x2="757" y2="667.5" stroke="#a8a8a8" stroke-width="1" stroke-dasharray="2.5 2"/>
<line x1="757" y1="534.5" x2="1367" y2="534.5" stroke="#a8a8a8" stroke-width="1" stroke-dasharray="2.5 2"/>
<text x="0" y="0" font-size="16" fill="#111" font-family="Liberation Sans" transform="translate(445.8 195.7) scale(0.97 1)">24PIN-BTB</text>
<text x="0" y="0" font-size="16.3" fill="#111" font-family="Liberation Sans" transform="translate(1048 215.9) scale(0.89 1)">RF</text>
<text x="0" y="0" font-size="16.6" fill="#111" font-family="Liberation Sans" transform="translate(849 581) scale(0.85 1)">SPK</text>
<text x="0" y="0" font-size="16.5" fill="#111" font-family="Liberation Sans" transform="translate(1245.8 582.5) scale(0.99 1)">MIC</text>
<text x="0" y="0" font-size="15.8" fill="#111" font-family="Liberation Sans" transform="translate(465.3 705.5) scale(1.06 1)">VIB</text>
<rect x="549.5" y="251.5" width="49.0" height="124.0" fill="none" stroke="#f6f6cc" stroke-width="1" />
<rect x="559.5" y="258.5" width="29.0" height="106.0" fill="none" stroke="#505050" stroke-width="1" />
<text x="563" y="257" font-size="3.5" fill="#555" text-anchor="start" font-family="Liberation Sans" >J100</text>
<line x1="549" y1="266.5" x2="559.5" y2="266.5" stroke="#7a7a7a" stroke-width="1" />
<text x="552" y="265.5" font-size="3.5" fill="#555" text-anchor="start" font-family="Liberation Sans" >1</text>
<line x1="549" y1="274.5" x2="559.5" y2="274.5" stroke="#7a7a7a" stroke-width="1" />
<text x="552" y="273.675" font-size="3.5" fill="#555" text-anchor="start" font-family="Liberation Sans" >2</text>
<line x1="549" y1="282.5" x2="559.5" y2="282.5" stroke="#7a7a7a" stroke-width="1" />
<text x="552" y="281.85" font-size="3.5" fill="#555" text-anchor="start" font-family="Liberation Sans" >3</text>
<line x1="549" y1="291.5" x2="559.5" y2="291.5" stroke="#7a7a7a" stroke-width="1" />
<text x="552" y="290.025" font-size="3.5" fill="#555" text-anchor="start" font-family="Liberation Sans" >4</text>
<line x1="549" y1="299.5" x2="559.5" y2="299.5" stroke="#7a7a7a" stroke-width="1" />
<text x="552" y="298.2" font-size="3.5" fill="#555" text-anchor="start" font-family="Liberation Sans" >5</text>
<line x1="549" y1="307.5" x2="559.5" y2="307.5" stroke="#7a7a7a" stroke-width="1" />
<text x="552" y="306.375" font-size="3.5" fill="#555" text-anchor="start" font-family="Liberation Sans" >6</text>
<line x1="549" y1="315.5" x2="559.5" y2="315.5" stroke="#7a7a7a" stroke-width="1" />
<text x="552" y="314.55" font-size="3.5" fill="#555" text-anchor="start" font-family="Liberation Sans" >7</text>
<line x1="549" y1="323.5" x2="559.5" y2="323.5" stroke="#7a7a7a" stroke-width="1" />
<text x="552" y="322.725" font-size="3.5" fill="#555" text-anchor="start" font-family="Liberation Sans" >8</text>
<line x1="549" y1="331.5" x2="559.5" y2="331.5" stroke="#7a7a7a" stroke-width="1" />
<text x="552" y="330.9" font-size="3.5" fill="#555" text-anchor="start" font-family="Liberation Sans" >9</text>
<line x1="549" y1="340.5" x2="559.5" y2="340.5" stroke="#7a7a7a" stroke-width="1" />
<text x="552" y="339.075" font-size="3.5" fill="#555" text-anchor="start" font-family="Liberation Sans" >10</text>
<line x1="549" y1="348.5" x2="559.5" y2="348.5" stroke="#7a7a7a" stroke-width="1" />
<text x="552" y="347.25" font-size="3.5" fill="#555" text-anchor="start" font-family="Liberation Sans" >11</text>
<line x1="549" y1="356.5" x2="559.5" y2="356.5" stroke="#7a7a7a" stroke-width="1" />
<text x="552" y="355.425" font-size="3.5" fill="#555" text-anchor="start" font-family="Liberation Sans" >12</text>
<line x1="588.5" y1="262.5" x2="598" y2="262.5" stroke="#7a7a7a" stroke-width="1" />
<text x="590" y="261.5" font-size="3.5" fill="#555" text-anchor="start" font-family="Liberation Sans" >25</text>
<line x1="588.5" y1="270.5" x2="598" y2="270.5" stroke="#7a7a7a" stroke-width="1" />
<text x="590" y="269.675" font-size="3.5" fill="#555" text-anchor="start" font-family="Liberation Sans" >24</text>
<line x1="588.5" y1="278.5" x2="598" y2="278.5" stroke="#7a7a7a" stroke-width="1" />
<text x="590" y="277.85" font-size="3.5" fill="#555" text-anchor="start" font-family="Liberation Sans" >23</text>
<line x1="588.5" y1="287.5" x2="598" y2="287.5" stroke="#7a7a7a" stroke-width="1" />
<text x="590" y="286.025" font-size="3.5" fill="#555" text-anchor="start" font-family="Liberation Sans" >22</text>
<line x1="588.5" y1="295.5" x2="598" y2="295.5" stroke="#7a7a7a" stroke-width="1" />
<text x="590" y="294.2" font-size="3.5" fill="#555" text-anchor="start" font-family="Liberation Sans" >21</text>
<line x1="588.5" y1="303.5" x2="598" y2="303.5" stroke="#7a7a7a" stroke-width="1" />
<text x="590" y="302.375" font-size="3.5" fill="#555" text-anchor="start" font-family="Liberation Sans" >20</text>
<line x1="588.5" y1="311.5" x2="598" y2="311.5" stroke="#7a7a7a" stroke-width="1" />
<text x="590" y="310.55" font-size="3.5" fill="#555" text-anchor="start" font-family="Liberation Sans" >19</text>
<line x1="588.5" y1="319.5" x2="598" y2="319.5" stroke="#7a7a7a" stroke-width="1" />
<text x="590" y="318.725" font-size="3.5" fill="#555" text-anchor="start" font-family="Liberation Sans" >18</text>
<line x1="588.5" y1="327.5" x2="598" y2="327.5" stroke="#7a7a7a" stroke-width="1" />
<text x="590" y="326.9" font-size="3.5" fill="#555" text-anchor="start" font-family="Liberation Sans" >17</text>
<line x1="588.5" y1="336.5" x2="598" y2="336.5" stroke="#7a7a7a" stroke-width="1" />
<text x="590" y="335.075" font-size="3.5" fill="#555" text-anchor="start" font-family="Liberation Sans" >16</text>
<line x1="588.5" y1="344.5" x2="598" y2="344.5" stroke="#7a7a7a" stroke-width="1" />
<text x="590" y="343.25" font-size="3.5" fill="#555" text-anchor="start" font-family="Liberation Sans" >15</text>
<line x1="588.5" y1="352.5" x2="598" y2="352.5" stroke="#7a7a7a" stroke-width="1" />
<text x="590" y="351.425" font-size="3.5" fill="#555" text-anchor="start" font-family="Liberation Sans" >14</text>
<line x1="588.5" y1="360.5" x2="598" y2="360.5" stroke="#7a7a7a" stroke-width="1" />
<text x="590" y="359.6" font-size="3.5" fill="#555" text-anchor="start" font-family="Liberation Sans" >13</text>
<line x1="523" y1="266.5" x2="549" y2="266.5" stroke="#7a7a7a" stroke-width="1" />
<line x1="522.5" y1="261.5" x2="522.5" y2="271.5" stroke="#808080" stroke-width="1" />
<line x1="520.5" y1="263.5" x2="520.5" y2="269.5" stroke="#b0b0b0" stroke-width="1" />
<line x1="518.5" y1="265.5" x2="518.5" y2="267.5" stroke="#c8c8c8" stroke-width="1" />
<circle cx="541.6" cy="266.5" r="1.4" fill="#303030"/>
<line x1="541.5" y1="266.5" x2="541.5" y2="274.675" stroke="#7a7a7a" stroke-width="1" />
<line x1="541.5" y1="274.5" x2="549" y2="274.5" stroke="#7a7a7a" stroke-width="1" />
<line x1="523" y1="307.5" x2="549" y2="307.5" stroke="#7a7a7a" stroke-width="1" />
<line x1="522.5" y1="302.375" x2="522.5" y2="312.375" stroke="#808080" stroke-width="1" />
<line x1="520.5" y1="304.375" x2="520.5" y2="310.375" stroke="#b0b0b0" stroke-width="1" />
<line x1="518.5" y1="306.375" x2="518.5" y2="308.375" stroke="#c8c8c8" stroke-width="1" />
<circle cx="539" cy="307.375" r="1.4" fill="#303030"/>
<line x1="539.5" y1="307.375" x2="539.5" y2="315.55" stroke="#7a7a7a" stroke-width="1" />
<line x1="539.5" y1="315.5" x2="549" y2="315.5" stroke="#7a7a7a" stroke-width="1" />
<line x1="523" y1="356.5" x2="549" y2="356.5" stroke="#7a7a7a" stroke-width="1" />
<line x1="522.5" y1="351.425" x2="522.5" y2="361.425" stroke="#808080" stroke-width="1" />
<line x1="520.5" y1="353.425" x2="520.5" y2="359.425" stroke="#b0b0b0" stroke-width="1" />
<line x1="518.5" y1="355.425" x2="518.5" y2="357.425" stroke="#c8c8c8" stroke-width="1" />
<circle cx="539" cy="356.425" r="1.4" fill="#303030"/>
<line x1="539.5" y1="348.25" x2="539.5" y2="356.425" stroke="#7a7a7a" stroke-width="1" />
<line x1="539.5" y1="348.5" x2="549" y2="348.5" stroke="#7a7a7a" stroke-width="1" />
<circle cx="486.8" cy="282.85" r="2.2" fill="#fff" stroke="#606060" stroke-width="0.9"/>
<line x1="489" y1="282.5" x2="549" y2="282.5" stroke="#7a7a7a" stroke-width="1" />
<text x="482.5" y="284.85" font-size="5" fill="#3434a0" text-anchor="end" font-family="Liberation Sans"  text-decoration="underline overline" font-weight="bold">XXXXXX</text>
<path d="M484.5 288.525 h5 l3 2.5 l-3 2.5 h-5z" fill="#fff" stroke="#909090" stroke-width="0.8"/>
<line x1="492.5" y1="291.5" x2="549" y2="291.5" stroke="#7a7a7a" stroke-width="1" />
<text x="447" y="292.525" font-size="3.5" fill="#888" text-anchor="start" font-family="Liberation Sans" >[1]</text>
<text x="482.5" y="293.025" font-size="5" fill="#3434a0" text-anchor="end" font-family="Liberation Sans"  text-decoration="underline overline" font-weight="bold">XXXXX</text>
<path d="M484.5 296.7 h5 l3 2.5 l-3 2.5 h-5z" fill="#fff" stroke="#909090" stroke-width="0.8"/>
<line x1="492.5" y1="299.5" x2="549" y2="299.5" stroke="#7a7a7a" stroke-width="1" />
<text x="447" y="300.7" font-size="3.5" fill="#888" text-anchor="start" font-family="Liberation Sans" >[1]</text>
<text x="482.5" y="301.2" font-size="5" fill="#3434a0" text-anchor="end" font-family="Liberation Sans"  text-decoration="underline overline" font-weight="bold">XXXX</text>
<path d="M484.5 321.225 h5 l3 2.5 l-3 2.5 h-5z" fill="#fff" stroke="#909090" stroke-width="0.8"/>
<line x1="492.5" y1="323.5" x2="549" y2="323.5" stroke="#7a7a7a" stroke-width="1" />
<text x="447" y="325.225" font-size="3.5" fill="#888" text-anchor="start" font-family="Liberation Sans" >[1]</text>
<text x="482.5" y="325.725" font-size="5" fill="#3434a0" text-anchor="end" font-family="Liberation Sans"  text-decoration="underline overline" font-weight="bold">XXX_XXXXXX</text>
<path d="M484.5 329.4 h5 l3 2.5 l-3 2.5 h-5z" fill="#fff" stroke="#909090" stroke-width="0.8"/>
<line x1="492.5" y1="331.5" x2="549" y2="331.5" stroke="#7a7a7a" stroke-width="1" />
<text x="447" y="333.4" font-size="3.5" fill="#888" text-anchor="start" font-family="Liberation Sans" >[1]</text>
<text x="482.5" y="333.9" font-size="5" fill="#3434a0" text-anchor="end" font-family="Liberation Sans"  text-decoration="underline overline" font-weight="bold">XXXXXXXXX</text>
<circle cx="486.8" cy="340.075" r="2.2" fill="#fff" stroke="#606060" stroke-width="0.9"/>
<line x1="489" y1="340.5" x2="549" y2="340.5" stroke="#7a7a7a" stroke-width="1" />
<text x="482.5" y="342.075" font-size="5" fill="#3434a0" text-anchor="end" font-family="Liberation Sans"  text-decoration="underline overline" font-weight="bold">XXXXXXXX</text>
<line x1="567.5" y1="364.5" x2="567.5" y2="385" stroke="#7a7a7a" stroke-width="1" />
<line x1="575.5" y1="364.5" x2="575.5" y2="376" stroke="#7a7a7a" stroke-width="1" />
<line x1="567.5" y1="376.5" x2="575.5" y2="376.5" stroke="#7a7a7a" stroke-width="1" />
<circle cx="567.5" cy="376.5" r="1.4" fill="#303030"/>
<line x1="562.5" y1="385.5" x2="572.5" y2="385.5" stroke="#909090" stroke-width="1" />
<line x1="564.5" y1="387.5" x2="570.5" y2="387.5" stroke="#b0b0b0" stroke-width="1" />
<line x1="566.5" y1="389.5" x2="568.5" y2="389.5" stroke="#c8c8c8" stroke-width="1" />
<text x="566" y="372" font-size="3" fill="#555" text-anchor="start" font-family="Liberation Sans" >21</text>
<text x="574" y="372" font-size="3" fill="#555" text-anchor="start" font-family="Liberation Sans" >26</text>
<line x1="598" y1="262.5" x2="626" y2="262.5" stroke="#7a7a7a" stroke-width="1" />
<line x1="626.5" y1="257.5" x2="626.5" y2="267.5" stroke="#808080" stroke-width="1" />
<line x1="628.5" y1="259.5" x2="628.5" y2="265.5" stroke="#b0b0b0" stroke-width="1" />
<line x1="630.5" y1="261.5" x2="630.5" y2="263.5" stroke="#c8c8c8" stroke-width="1" />
<line x1="598" y1="278.5" x2="626" y2="278.5" stroke="#7a7a7a" stroke-width="1" />
<line x1="626.5" y1="273.85" x2="626.5" y2="283.85" stroke="#808080" stroke-width="1" />
<line x1="628.5" y1="275.85" x2="628.5" y2="281.85" stroke="#b0b0b0" stroke-width="1" />
<line x1="630.5" y1="277.85" x2="630.5" y2="279.85" stroke="#c8c8c8" stroke-width="1" />
<line x1="598" y1="295.5" x2="626" y2="295.5" stroke="#7a7a7a" stroke-width="1" />
<line x1="626.5" y1="290.2" x2="626.5" y2="300.2" stroke="#808080" stroke-width="1" />
<line x1="628.5" y1="292.2" x2="628.5" y2="298.2" stroke="#b0b0b0" stroke-width="1" />
<line x1="630.5" y1="294.2" x2="630.5" y2="296.2" stroke="#c8c8c8" stroke-width="1" />
<line x1="598" y1="327.5" x2="626" y2="327.5" stroke="#7a7a7a" stroke-width="1" />
<line x1="626.5" y1="322.9" x2="626.5" y2="332.9" stroke="#808080" stroke-width="1" />
<line x1="628.5" y1="324.9" x2="628.5" y2="330.9" stroke="#b0b0b0" stroke-width="1" />
<line x1="630.5" y1="326.9" x2="630.5" y2="328.9" stroke="#c8c8c8" stroke-width="1" />
<line x1="598" y1="360.5" x2="626" y2="360.5" stroke="#7a7a7a" stroke-width="1" />
<line x1="626.5" y1="355.6" x2="626.5" y2="365.6" stroke="#808080" stroke-width="1" />
<line x1="628.5" y1="357.6" x2="628.5" y2="363.6" stroke="#b0b0b0" stroke-width="1" />
<line x1="630.5" y1="359.6" x2="630.5" y2="361.6" stroke="#c8c8c8" stroke-width="1" />
<line x1="598" y1="270.5" x2="712" y2="270.5" stroke="#7a7a7a" stroke-width="1" />
<circle cx="714" cy="270.675" r="2.2" fill="#fff" stroke="#606060" stroke-width="0.9"/>
<text x="719" y="276.675" font-size="5" fill="#3434a0" text-anchor="start" font-family="Liberation Sans"  text-decoration="underline overline" font-weight="bold">XXXX</text>
<line x1="598" y1="287.5" x2="707" y2="287.5" stroke="#7a7a7a" stroke-width="1" />
<path d="M707 287.025 l2 -2.5 h8 v5 h-8z" fill="#fff" stroke="#909090" stroke-width="0.8"/>
<text x="716" y="289.025" font-size="5.2" fill="#3434a0" text-anchor="start" font-family="Liberation Sans"  text-decoration="underline overline" font-weight="bold">XXXXXXX</text>
<text x="737" y="288.025" font-size="3.5" fill="#888" text-anchor="start" font-family="Liberation Sans" >[1]</text>
<circle cx="665" cy="287.025" r="1.4" fill="#303030"/>
<circle cx="679" cy="287.025" r="1.4" fill="#303030"/>
<line x1="665.5" y1="232" x2="665.5" y2="287.025" stroke="#7a7a7a" stroke-width="1" />
<line x1="679.5" y1="232" x2="679.5" y2="287.025" stroke="#7a7a7a" stroke-width="1" />
<line x1="660.5" y1="230.5" x2="670.5" y2="230.5" stroke="#909090" stroke-width="1" />
<line x1="662.5" y1="228.5" x2="668.5" y2="228.5" stroke="#b0b0b0" stroke-width="1" />
<line x1="664.5" y1="226.5" x2="666.5" y2="226.5" stroke="#c8c8c8" stroke-width="1" />
<line x1="674.5" y1="230.5" x2="684.5" y2="230.5" stroke="#909090" stroke-width="1" />
<line x1="676.5" y1="228.5" x2="682.5" y2="228.5" stroke="#b0b0b0" stroke-width="1" />
<line x1="678.5" y1="226.5" x2="680.5" y2="226.5" stroke="#c8c8c8" stroke-width="1" />
<rect x="653.5" y="247.5" width="18.0" height="15.0" fill="none" stroke="#f6f6cc" stroke-width="1" />
<rect x="672.5" y="242.5" width="16.0" height="31.0" fill="none" stroke="#f6f6cc" stroke-width="1" />
<path d="M662.5 251 h6 l-3 4z" fill="#303030"/>
<line x1="662.5" y1="255.5" x2="668.5" y2="255.5" stroke="#303030" stroke-width="1" />
<rect x="674.5" y="249.9" width="10" height="1.6" fill="#404040"/>
<rect x="674.5" y="254.5" width="10" height="1.6" fill="#404040"/>
<text x="655" y="259" font-size="3.2" fill="#555" text-anchor="start" font-family="Liberation Sans" >D101</text>
<text x="682" y="250" font-size="3.2" fill="#555" text-anchor="start" font-family="Liberation Sans" >C135</text>
<text x="682" y="260" font-size="3.2" fill="#555" text-anchor="start" font-family="Liberation Sans" >NC</text>
<circle cx="616.7" cy="303.375" r="1.4" fill="#303030"/>
<line x1="598" y1="303.5" x2="707" y2="303.5" stroke="#7a7a7a" stroke-width="1" />
<path d="M707 303.375 l2 -2.5 h8 v5 h-8z" fill="#fff" stroke="#909090" stroke-width="0.8"/>
<line x1="616.5" y1="303.375" x2="616.5" y2="319.725" stroke="#7a7a7a" stroke-width="1" />
<line x1="598" y1="311.5" x2="616.5" y2="311.5" stroke="#7a7a7a" stroke-width="1" />
<line x1="598" y1="319.5" x2="616.5" y2="319.5" stroke="#7a7a7a" stroke-width="1" />
<circle cx="616.7" cy="311.55" r="1.4" fill="#303030"/>
<circle cx="616.7" cy="336.075" r="1.4" fill="#303030"/>
<line x1="598" y1="336.5" x2="707" y2="336.5" stroke="#7a7a7a" stroke-width="1" />
<path d="M707 336.075 l2 -2.5 h8 v5 h-8z" fill="#fff" stroke="#909090" stroke-width="0.8"/>
<line x1="616.5" y1="336.075" x2="616.5" y2="352.425" stroke="#7a7a7a" stroke-width="1" />
<line x1="598" y1="344.5" x2="616.5" y2="344.5" stroke="#7a7a7a" stroke-width="1" />
<line x1="598" y1="352.5" x2="616.5" y2="352.5" stroke="#7a7a7a" stroke-width="1" />
<circle cx="616.7" cy="344.25" r="1.4" fill="#303030"/>
<text x="716" y="305.375" font-size="5.2" fill="#3434a0" text-anchor="start" font-family="Liberation Sans"  text-decoration="underline overline" font-weight="bold">XXXX</text>
<text x="735" y="304.375" font-size="3.5" fill="#888" text-anchor="start" font-family="Liberation Sans" >[1]</text>
<text x="716" y="338.075" font-size="5.2" fill="#3434a0" text-anchor="start" font-family="Liberation Sans"  text-decoration="underline overline" font-weight="bold">XXXX</text>
<text x="737" y="337.075" font-size="3.5" fill="#888" text-anchor="start" font-family="Liberation Sans" >[1]</text>
<rect x="513.5" y="488.5" width="18.0" height="19.0" fill="none" stroke="#f6f6cc" stroke-width="1" />
<rect x="532.5" y="488.5" width="18.0" height="19.0" fill="none" stroke="#f6f6cc" stroke-width="1" />
<rect x="520.5" y="495.5" width="4" height="4" fill="#101010"/>
<line x1="522.5" y1="499" x2="522.5" y2="515" stroke="#7a7a7a" stroke-width="1" />
<line x1="517.5" y1="515.5" x2="527.5" y2="515.5" stroke="#909090" stroke-width="1" />
<line x1="519.5" y1="517.5" x2="525.5" y2="517.5" stroke="#b0b0b0" stroke-width="1" />
<line x1="521.5" y1="519.5" x2="523.5" y2="519.5" stroke="#c8c8c8" stroke-width="1" />
<rect x="539.4" y="495.5" width="4" height="4" fill="#101010"/>
<line x1="541.5" y1="499" x2="541.5" y2="521" stroke="#7a7a7a" stroke-width="1" />
<path d="M541.4 521 l2.5 2.5 v6 h-5 v-6z" fill="#fff" stroke="#909090" stroke-width="0.8"/>
<text x="515" y="493" font-size="3.5" fill="#555" text-anchor="start" font-family="Liberation Sans" >ANT104</text>
<text x="534" y="493" font-size="3.5" fill="#555" text-anchor="start" font-family="Liberation Sans" >ANT105</text>
<text x="532" y="536" font-size="5" fill="#3434a0" text-anchor="start" font-family="Liberation Sans"  text-decoration="underline overline" font-weight="bold">XXXXX</text>
<text x="537" y="540" font-size="3" fill="#888" text-anchor="start" font-family="Liberation Sans" >[1]</text>
<text x="550" y="694" font-size="6" fill="#3434a0" text-anchor="start" font-family="Liberation Sans"  text-decoration="underline overline" font-weight="bold">SBB</text>
<circle cx="555.4" cy="700.6" r="2.6" fill="#fff" stroke="#606060" stroke-width="0.9"/>
<line x1="555.5" y1="703" x2="555.5" y2="812" stroke="#7a7a7a" stroke-width="1" />
<line x1="550.5" y1="812.5" x2="560.5" y2="812.5" stroke="#909090" stroke-width="1" />
<line x1="552.5" y1="814.5" x2="558.5" y2="814.5" stroke="#b0b0b0" stroke-width="1" />
<line x1="554.5" y1="816.5" x2="556.5" y2="816.5" stroke="#c8c8c8" stroke-width="1" />
<circle cx="555.5" cy="722.4" r="1.4" fill="#303030"/>
<line x1="555.5" y1="722.5" x2="598" y2="722.5" stroke="#7a7a7a" stroke-width="1" />
<line x1="598.5" y1="717.5" x2="598.5" y2="727.5" stroke="#808080" stroke-width="1" />
<line x1="600.5" y1="719.5" x2="600.5" y2="725.5" stroke="#b0b0b0" stroke-width="1" />
<line x1="602.5" y1="721.5" x2="602.5" y2="723.5" stroke="#c8c8c8" stroke-width="1" />
<rect x="572.4" y="718.0" width="1.6" height="9" fill="#404040"/>
<rect x="577.0" y="718.0" width="1.6" height="9" fill="#404040"/>
<rect x="561.5" y="714.5" width="29.0" height="15.0" fill="none" stroke="#f6f6cc" stroke-width="1" />
<text x="561" y="720" font-size="3.5" fill="#555" text-anchor="start" font-family="Liberation Sans" >C102</text>
<text x="580" y="720" font-size="3.5" fill="#555" text-anchor="start" font-family="Liberation Sans" >22uF</text>
<circle cx="555.5" cy="745.5" r="1.4" fill="#303030"/>
<line x1="555.5" y1="745.5" x2="588" y2="745.5" stroke="#7a7a7a" stroke-width="1" />
<rect x="587.5" y="743.5" width="4" height="4" fill="#101010"/>
<circle cx="555.5" cy="794.4" r="1.4" fill="#303030"/>
<line x1="555.5" y1="794.5" x2="588" y2="794.5" stroke="#7a7a7a" stroke-width="1" />
<rect x="587.5" y="792.5" width="4" height="4" fill="#101010"/>
<rect x="583.5" y="735.5" width="17.0" height="23.0" fill="none" stroke="#f6f6cc" stroke-width="1" />
<rect x="583.5" y="784.5" width="17.0" height="23.0" fill="none" stroke="#f6f6cc" stroke-width="1" />
<text x="594" y="752" font-size="3.5" fill="#555" font-family="Liberation Sans" transform="rotate(-90 594 752)">MOT107</text>
<text x="594" y="801" font-size="3.5" fill="#555" font-family="Liberation Sans" transform="rotate(-90 594 801)">MOT108</text>
<rect x="550.5" y="767.9" width="10" height="1.6" fill="#404040"/>
<rect x="550.5" y="772.5" width="10" height="1.6" fill="#404040"/>
<rect x="540.5" y="757.5" width="21.0" height="28.0" fill="none" stroke="#f6f6cc" stroke-width="1" />
<text x="543" y="765" font-size="3.5" fill="#555" text-anchor="start" font-family="Liberation Sans" >C100</text>
<text x="543" y="779" font-size="3.5" fill="#555" text-anchor="start" font-family="Liberation Sans" >100nF</text>
<rect x="799.5" y="254.5" width="18.0" height="22.0" fill="none" stroke="#f6f6cc" stroke-width="1" />
<text x="808" y="259" font-size="3.5" fill="#555" text-anchor="middle" font-family="Liberation Sans" >GND</text>
<text x="808" y="263" font-size="3.5" fill="#555" text-anchor="middle" font-family="Liberation Sans" >ANT101</text>
<rect x="806.2" y="266.2" width="3.6" height="3.6" fill="#101010"/>
<rect x="834.5" y="254.5" width="18.0" height="22.0" fill="none" stroke="#f6f6cc" stroke-width="1" />
<text x="842.5" y="259" font-size="3.5" fill="#555" text-anchor="middle" font-family="Liberation Sans" >GND</text>
<text x="842.5" y="263" font-size="3.5" fill="#555" text-anchor="middle" font-family="Liberation Sans" >ANT102</text>
<rect x="840.7" y="266.2" width="3.6" height="3.6" fill="#101010"/>
<rect x="890.5" y="254.5" width="18.0" height="22.0" fill="none" stroke="#f6f6cc" stroke-width="1" />
<text x="899" y="259" font-size="3.5" fill="#555" text-anchor="middle" font-family="Liberation Sans" >GND</text>
<text x="899" y="263" font-size="3.5" fill="#555" text-anchor="middle" font-family="Liberation Sans" >ANT103</text>
<rect x="897.2" y="266.2" width="3.6" height="3.6" fill="#101010"/>
<line x1="808.5" y1="268" x2="808.5" y2="289" stroke="#7a7a7a" stroke-width="1" />
<line x1="803.5" y1="289.5" x2="813.5" y2="289.5" stroke="#909090" stroke-width="1" />
<line x1="805.5" y1="291.5" x2="811.5" y2="291.5" stroke="#b0b0b0" stroke-width="1" />
<line x1="807.5" y1="293.5" x2="809.5" y2="293.5" stroke="#c8c8c8" stroke-width="1" />
<line x1="899.5" y1="268" x2="899.5" y2="289" stroke="#7a7a7a" stroke-width="1" />
<line x1="894.5" y1="289.5" x2="904.5" y2="289.5" stroke="#909090" stroke-width="1" />
<line x1="896.5" y1="291.5" x2="902.5" y2="291.5" stroke="#b0b0b0" stroke-width="1" />
<line x1="898.5" y1="293.5" x2="900.5" y2="293.5" stroke="#c8c8c8" stroke-width="1" />
<line x1="842.5" y1="268" x2="842.5" y2="483.5" stroke="#7a7a7a" stroke-width="1" />
<circle cx="842.5" cy="284.6" r="1.4" fill="#303030"/>
<line x1="842.5" y1="284.5" x2="881" y2="284.5" stroke="#7a7a7a" stroke-width="1" />
<line x1="881.5" y1="279.6" x2="881.5" y2="289.6" stroke="#808080" stroke-width="1" />
<line x1="883.5" y1="281.6" x2="883.5" y2="287.6" stroke="#b0b0b0" stroke-width="1" />
<line x1="885.5" y1="283.6" x2="885.5" y2="285.6" stroke="#c8c8c8" stroke-width="1" />
<rect x="856.9" y="280.1" width="1.6" height="9" fill="#404040"/>
<rect x="861.5" y="280.1" width="1.6" height="9" fill="#404040"/>
<rect x="846.5" y="277.5" width="32.0" height="14.0" fill="none" stroke="#f6f6cc" stroke-width="1" />
<text x="849" y="283.6" font-size="3.5" fill="#555" text-anchor="start" font-family="Liberation Sans" >NC</text>
<text x="864" y="283.6" font-size="3.5" fill="#555" text-anchor="start" font-family="Liberation Sans" >C128</text>
<circle cx="842.5" cy="323.7" r="1.4" fill="#303030"/>
<line x1="842.5" y1="323.5" x2="881" y2="323.5" stroke="#7a7a7a" stroke-width="1" />
<line x1="881.5" y1="318.7" x2="881.5" y2="328.7" stroke="#808080" stroke-width="1" />
<line x1="883.5" y1="320.7" x2="883.5" y2="326.7" stroke="#b0b0b0" stroke-width="1" />
<line x1="885.5" y1="322.7" x2="885.5" y2="324.7" stroke="#c8c8c8" stroke-width="1" />
<rect x="856.9" y="319.2" width="1.6" height="9" fill="#404040"/>
<rect x="861.5" y="319.2" width="1.6" height="9" fill="#404040"/>
<rect x="846.5" y="316.5" width="32.0" height="14.0" fill="none" stroke="#f6f6cc" stroke-width="1" />
<text x="849" y="322.7" font-size="3.5" fill="#555" text-anchor="start" font-family="Liberation Sans" >NC</text>
<text x="864" y="322.7" font-size="3.5" fill="#555" text-anchor="start" font-family="Liberation Sans" >C107</text>
<circle cx="842.5" cy="364.5" r="1.4" fill="#303030"/>
<line x1="842.5" y1="364.5" x2="881" y2="364.5" stroke="#7a7a7a" stroke-width="1" />
<line x1="881.5" y1="359.5" x2="881.5" y2="369.5" stroke="#808080" stroke-width="1" />
<line x1="883.5" y1="361.5" x2="883.5" y2="367.5" stroke="#b0b0b0" stroke-width="1" />
<line x1="885.5" y1="363.5" x2="885.5" y2="365.5" stroke="#c8c8c8" stroke-width="1" />
<rect x="856.9" y="360.0" width="1.6" height="9" fill="#404040"/>
<rect x="861.5" y="360.0" width="1.6" height="9" fill="#404040"/>
<rect x="846.5" y="357.5" width="32.0" height="14.0" fill="none" stroke="#f6f6cc" stroke-width="1" />
<text x="849" y="363.5" font-size="3.5" fill="#555" text-anchor="start" font-family="Liberation Sans" >NC</text>
<text x="864" y="363.5" font-size="3.5" fill="#555" text-anchor="start" font-family="Liberation Sans" >C114</text>
<rect x="840.5" y="296" width="4" height="15" fill="#fff"/>
<polyline points="842.5,296 840.0,297.25 845.0,299.75 840.0,302.25 845.0,304.75 840.0,307.25 845.0,309.75 842.5,311" fill="none" stroke="#505050" stroke-width="1"/>
<rect x="826.5" y="290.5" width="22.0" height="27.0" fill="none" stroke="#f6f6cc" stroke-width="1" />
<text x="830" y="300" font-size="3.5" fill="#555" text-anchor="start" font-family="Liberation Sans" >R101</text>
<text x="833" y="310" font-size="3.5" fill="#555" text-anchor="start" font-family="Liberation Sans" >0R</text>
<rect x="840.5" y="337" width="4" height="15" fill="#fff"/>
<polyline points="842.5,337 840.0,338.25 845.0,340.75 840.0,343.25 845.0,345.75 840.0,348.25 845.0,350.75 842.5,352" fill="none" stroke="#505050" stroke-width="1"/>
<rect x="826.5" y="331.5" width="22.0" height="27.0" fill="none" stroke="#f6f6cc" stroke-width="1" />
<text x="830" y="341" font-size="3.5" fill="#555" text-anchor="start" font-family="Liberation Sans" >R102</text>
<text x="833" y="351" font-size="3.5" fill="#555" text-anchor="start" font-family="Liberation Sans" >0R</text>
<rect x="840.5" y="377" width="4" height="15" fill="#fff"/>
<polyline points="842.5,377 840.0,378.25 845.0,380.75 840.0,383.25 845.0,385.75 840.0,388.25 845.0,390.75 842.5,392" fill="none" stroke="#505050" stroke-width="1"/>
<rect x="826.5" y="371.5" width="22.0" height="27.0" fill="none" stroke="#f6f6cc" stroke-width="1" />
<text x="830" y="381" font-size="3.5" fill="#555" text-anchor="start" font-family="Liberation Sans" >R103</text>
<text x="833" y="391" font-size="3.5" fill="#555" text-anchor="start" font-family="Liberation Sans" >0R</text>
<circle cx="842.5" cy="407.6" r="1.4" fill="#303030"/>
<line x1="842.5" y1="407.5" x2="855" y2="407.5" stroke="#7a7a7a" stroke-width="1" />
<path d="M855 407.5 a1.875 1.875 0 0 1 3.75 0 a1.875 1.875 0 0 1 3.75 0 a1.875 1.875 0 0 1 3.75 0 a1.875 1.875 0 0 1 3.75 0" fill="none" stroke="#505050" stroke-width="1"/>
<line x1="870" y1="407.5" x2="932.5" y2="407.5" stroke="#7a7a7a" stroke-width="1" />
<text x="846" y="405" font-size="3.5" fill="#555" text-anchor="start" font-family="Liberation Sans" >NC</text>
<text x="872" y="405" font-size="3.5" fill="#555" text-anchor="start" font-family="Liberation Sans" >L101</text>
<circle cx="895.7" cy="407.6" r="1.4" fill="#303030"/>
<line x1="895.5" y1="407.5" x2="895.5" y2="445" stroke="#7a7a7a" stroke-width="1" />
<rect x="890.5" y="421.9" width="10" height="1.6" fill="#404040"/>
<rect x="890.5" y="426.5" width="10" height="1.6" fill="#404040"/>
<line x1="890.5" y1="445.5" x2="900.5" y2="445.5" stroke="#909090" stroke-width="1" />
<line x1="892.5" y1="447.5" x2="898.5" y2="447.5" stroke="#b0b0b0" stroke-width="1" />
<line x1="894.5" y1="449.5" x2="896.5" y2="449.5" stroke="#c8c8c8" stroke-width="1" />
<rect x="882.5" y="413.5" width="24.0" height="27.0" fill="none" stroke="#f6f6cc" stroke-width="1" />
<text x="885" y="421" font-size="3.5" fill="#555" text-anchor="start" font-family="Liberation Sans" >C113</text>
<text x="888" y="433" font-size="3.5" fill="#555" text-anchor="start" font-family="Liberation Sans" >NC</text>
<rect x="922.5" y="308.5" width="63.0" height="130.0" fill="none" stroke="#f6f6cc" stroke-width="1" />
<rect x="932.5" y="386.5" width="32.0" height="41.0" fill="none" stroke="#505050" stroke-width="1" />
<text x="948" y="408" font-size="3.5" fill="#555" text-anchor="middle" font-family="Liberation Sans" >U101</text>
<line x1="940.5" y1="380" x2="940.5" y2="386.5" stroke="#7a7a7a" stroke-width="1" />
<line x1="940.5" y1="427.5" x2="940.5" y2="434" stroke="#7a7a7a" stroke-width="1" />
<line x1="948.5" y1="380" x2="948.5" y2="386.5" stroke="#7a7a7a" stroke-width="1" />
<line x1="948.5" y1="427.5" x2="948.5" y2="434" stroke="#7a7a7a" stroke-width="1" />
<line x1="956.5" y1="380" x2="956.5" y2="386.5" stroke="#7a7a7a" stroke-width="1" />
<line x1="956.5" y1="427.5" x2="956.5" y2="434" stroke="#7a7a7a" stroke-width="1" />
<line x1="940.5" y1="335" x2="940.5" y2="386.5" stroke="#7a7a7a" stroke-width="1" />
<line x1="935.5" y1="333.5" x2="945.5" y2="333.5" stroke="#909090" stroke-width="1" />
<line x1="937.5" y1="331.5" x2="943.5" y2="331.5" stroke="#b0b0b0" stroke-width="1" />
<line x1="939.5" y1="329.5" x2="941.5" y2="329.5" stroke="#c8c8c8" stroke-width="1" />
<rect x="935.5" y="354.9" width="10" height="1.6" fill="#404040"/>
<rect x="935.5" y="359.5" width="10" height="1.6" fill="#404040"/>
<line x1="940.5" y1="347.5" x2="948.5" y2="347.5" stroke="#7a7a7a" stroke-width="1" />
<line x1="948.5" y1="347.5" x2="948.5" y2="386.5" stroke="#7a7a7a" stroke-width="1" />
<rect x="928.5" y="347.5" width="19.0" height="22.0" fill="none" stroke="#f6f6cc" stroke-width="1" />
<text x="943" y="366" font-size="3" fill="#555" text-anchor="start" font-family="Liberation Sans" transform="rotate(-90 943 366)">C106</text>
<line x1="956.5" y1="335" x2="956.5" y2="386.5" stroke="#7a7a7a" stroke-width="1" />
<line x1="951.5" y1="333.5" x2="961.5" y2="333.5" stroke="#909090" stroke-width="1" />
<line x1="953.5" y1="331.5" x2="959.5" y2="331.5" stroke="#b0b0b0" stroke-width="1" />
<line x1="955.5" y1="329.5" x2="957.5" y2="329.5" stroke="#c8c8c8" stroke-width="1" />
<rect x="951.5" y="348.9" width="10" height="1.6" fill="#404040"/>
<rect x="951.5" y="353.5" width="10" height="1.6" fill="#404040"/>
<rect x="947.5" y="342.5" width="17.0" height="20.0" fill="none" stroke="#f6f6cc" stroke-width="1" />
<text x="948" y="360" font-size="3.2" fill="#555" text-anchor="start" font-family="Liberation Sans" >C104</text>
<circle cx="956.5" cy="372.5" r="1.4" fill="#303030"/>
<line x1="956.5" y1="372.5" x2="989" y2="372.5" stroke="#7a7a7a" stroke-width="1" />
<circle cx="973.5" cy="372.5" r="1.4" fill="#303030"/>
<line x1="973.5" y1="372.5" x2="973.5" y2="407.5" stroke="#7a7a7a" stroke-width="1" />
<line x1="964.5" y1="407.5" x2="973.5" y2="407.5" stroke="#7a7a7a" stroke-width="1" />
<path d="M989 372.5 l2 -2.5 h0 v5 h-0z" fill="#fff" stroke="#909090" stroke-width="0.8"/>
<text x="990" y="375" font-size="5.5" fill="#3434a0" text-anchor="start" font-family="Liberation Sans"  text-decoration="underline overline" font-weight="bold">CXXXXXJXXX</text>
<text x="979" y="372" font-size="3.3" fill="#666" font-family="Liberation Sans" transform="rotate(-90 979 372)">IC-RF-SWITCH-RF1347TR13-E6-MC.BS</text>
<line x1="940.5" y1="427.5" x2="940.5" y2="476" stroke="#7a7a7a" stroke-width="1" />
<rect x="935.5" y="445.9" width="10" height="1.6" fill="#404040"/>
<rect x="935.5" y="450.5" width="10" height="1.6" fill="#404040"/>
<line x1="935.5" y1="476.5" x2="945.5" y2="476.5" stroke="#909090" stroke-width="1" />
<line x1="937.5" y1="478.5" x2="943.5" y2="478.5" stroke="#b0b0b0" stroke-width="1" />
<line x1="939.5" y1="480.5" x2="941.5" y2="480.5" stroke="#c8c8c8" stroke-width="1" />
<line x1="948.5" y1="427.5" x2="948.5" y2="466" stroke="#7a7a7a" stroke-width="1" />
<line x1="940.5" y1="466.5" x2="948.5" y2="466.5" stroke="#7a7a7a" stroke-width="1" />
<circle cx="940.5" cy="466.5" r="1.4" fill="#303030"/>
<rect x="928.5" y="440.5" width="19.0" height="22.0" fill="none" stroke="#f6f6cc" stroke-width="1" />
<line x1="956.5" y1="427.5" x2="956.5" y2="474" stroke="#7a7a7a" stroke-width="1" />
<path d="M956.5 474 l2.5 2.5 v7 h-5 v-7z" fill="#fff" stroke="#909090" stroke-width="0.8"/>
<text x="960" y="516" font-size="5.5" fill="#3434a0" font-family="Liberation Sans" text-decoration="underline" transform="rotate(-90 960 516)">XXXXXXXX</text>
<text x="955" y="522" font-size="3" fill="#888" text-anchor="start" font-family="Liberation Sans" transform="rotate(-90 958 522)">[1]</text>
<circle cx="956.5" cy="452" r="1.4" fill="#303030"/>
<line x1="956.5" y1="452.5" x2="1000" y2="452.5" stroke="#7a7a7a" stroke-width="1" />
<line x1="1000.5" y1="447.5" x2="1000.5" y2="457.5" stroke="#808080" stroke-width="1" />
<line x1="1002.5" y1="449.5" x2="1002.5" y2="455.5" stroke="#b0b0b0" stroke-width="1" />
<line x1="1004.5" y1="451.5" x2="1004.5" y2="453.5" stroke="#c8c8c8" stroke-width="1" />
<rect x="974.9" y="448.0" width="1.6" height="9" fill="#404040"/>
<rect x="979.5" y="448.0" width="1.6" height="9" fill="#404040"/>
<rect x="963.5" y="440.5" width="27.0" height="22.0" fill="none" stroke="#f6f6cc" stroke-width="1" />
<text x="968" y="446" font-size="3.2" fill="#555" text-anchor="start" font-family="Liberation Sans" >C116</text>
<text x="982" y="448" font-size="3.2" fill="#555" text-anchor="start" font-family="Liberation Sans" >NC</text>
<rect x="834.5" y="454.5" width="16.0" height="17.0" fill="none" stroke="#505050" stroke-width="1" />
<circle cx="843" cy="462.5" r="3" fill="#fff" stroke="#606060" stroke-width="0.9"/>
<polyline points="834.5,462.5 822.5,462.5 822.5,483.5 862.5,483.5 862.5,462.5 850.5,462.5" fill="none" stroke="#7a7a7a" stroke-width="1"/>
<circle cx="842.5" cy="483.5" r="1.4" fill="#303030"/>
<circle cx="862.5" cy="462.5" r="1.4" fill="#303030"/>
<line x1="862.5" y1="462.5" x2="878" y2="462.5" stroke="#7a7a7a" stroke-width="1" />
<line x1="878.5" y1="457.5" x2="878.5" y2="467.5" stroke="#808080" stroke-width="1" />
<line x1="880.5" y1="459.5" x2="880.5" y2="465.5" stroke="#b0b0b0" stroke-width="1" />
<line x1="882.5" y1="461.5" x2="882.5" y2="463.5" stroke="#c8c8c8" stroke-width="1" />
<rect x="826.5" y="445.5" width="40.0" height="35.0" fill="none" stroke="#f6f6cc" stroke-width="1" />
<text x="855" y="450" font-size="3.5" fill="#555" text-anchor="start" font-family="Liberation Sans" >J101</text>
<text x="826" y="470" font-size="3" fill="#555" text-anchor="start" font-family="Liberation Sans" transform="rotate(-90 826 470)">RF</text>
<text x="858" y="472" font-size="3" fill="#555" text-anchor="start" font-family="Liberation Sans" transform="rotate(-90 858 472)">GND</text>
<rect x="1139.5" y="248.5" width="21.0" height="17.0" fill="none" stroke="#f6f6cc" stroke-width="1" />
<rect x="1148.2" y="254.2" width="3.6" height="3.6" fill="#101010"/>
<text x="1139" y="252" font-size="3.5" fill="#555" text-anchor="start" font-family="Liberation Sans" >ANT104</text>
<text x="1158" y="259" font-size="5.5" fill="#222" text-anchor="start" font-family="Liberation Sans" >GND</text>
<line x1="1150.5" y1="257" x2="1150.5" y2="334" stroke="#7a7a7a" stroke-width="1" />
<circle cx="1150.5" cy="293.5" r="1.4" fill="#303030"/>
<line x1="1150.5" y1="293.5" x2="1166" y2="293.5" stroke="#7a7a7a" stroke-width="1" />
<polyline points="1166,293.5 1167.4166666666667,291.0 1170.25,296.0 1173.0833333333333,291.0 1175.9166666666667,296.0 1178.75,291.0 1181.5833333333333,296.0 1183,293.5" fill="none" stroke="#505050" stroke-width="1"/>
<line x1="1183" y1="293.5" x2="1195.7" y2="293.5" stroke="#7a7a7a" stroke-width="1" />
<line x1="1196.5" y1="288.5" x2="1196.5" y2="298.5" stroke="#808080" stroke-width="1" />
<line x1="1198.5" y1="290.5" x2="1198.5" y2="296.5" stroke="#b0b0b0" stroke-width="1" />
<line x1="1200.5" y1="292.5" x2="1200.5" y2="294.5" stroke="#c8c8c8" stroke-width="1" />
<rect x="1152.5" y="286.5" width="38.0" height="14.0" fill="none" stroke="#f6f6cc" stroke-width="1" />
<text x="1157" y="292" font-size="3.5" fill="#555" text-anchor="start" font-family="Liberation Sans" >C111</text>
<text x="1184" y="291" font-size="3.5" fill="#555" text-anchor="start" font-family="Liberation Sans" >NC</text>
<rect x="1266.5" y="250.5" width="21.0" height="18.0" fill="none" stroke="#f6f6cc" stroke-width="1" />
<rect x="1273.2" y="256.2" width="3.6" height="3.6" fill="#101010"/>
<text x="1266" y="254" font-size="3.5" fill="#555" text-anchor="start" font-family="Liberation Sans" >ANT105</text>
<text x="1278.5" y="261" font-size="5.5" fill="#222" text-anchor="start" font-family="Liberation Sans" >GND</text>
<line x1="1275.5" y1="259" x2="1275.5" y2="283" stroke="#7a7a7a" stroke-width="1" />
<line x1="1270.5" y1="283.5" x2="1280.5" y2="283.5" stroke="#909090" stroke-width="1" />
<line x1="1272.5" y1="285.5" x2="1278.5" y2="285.5" stroke="#b0b0b0" stroke-width="1" />
<line x1="1274.5" y1="287.5" x2="1276.5" y2="287.5" stroke="#c8c8c8" stroke-width="1" />
<rect x="1119.5" y="323.5" width="130.0" height="63.0" fill="none" stroke="#f6f6cc" stroke-width="1" />
<rect x="1129.5" y="334.5" width="41.0" height="32.0" fill="none" stroke="#505050" stroke-width="1" />
<text x="1132" y="344.0" font-size="3.5" fill="#555" text-anchor="start" font-family="Liberation Sans" >RF1</text>
<text x="1168" y="344.0" font-size="3.5" fill="#555" text-anchor="end" font-family="Liberation Sans" >RF2</text>
<text x="1132" y="352.0" font-size="3.5" fill="#555" text-anchor="start" font-family="Liberation Sans" >GND</text>
<text x="1168" y="352.0" font-size="3.5" fill="#555" text-anchor="end" font-family="Liberation Sans" >GND</text>
<text x="1132" y="360.0" font-size="3.5" fill="#555" text-anchor="start" font-family="Liberation Sans" >CTL</text>
<text x="1168" y="360.0" font-size="3.5" fill="#555" text-anchor="end" font-family="Liberation Sans" >VDD</text>
<text x="1150" y="352" font-size="3.5" fill="#555" text-anchor="middle" font-family="Liberation Sans" >U102</text>
<text x="1148" y="341" font-size="3" fill="#555" text-anchor="start" font-family="Liberation Sans" transform="rotate(-90 1152 341)">RFC</text>
<line x1="1078" y1="342.5" x2="1129.5" y2="342.5" stroke="#7a7a7a" stroke-width="1" />
<line x1="1077.5" y1="337.5" x2="1077.5" y2="347.5" stroke="#808080" stroke-width="1" />
<line x1="1075.5" y1="339.5" x2="1075.5" y2="345.5" stroke="#b0b0b0" stroke-width="1" />
<line x1="1073.5" y1="341.5" x2="1073.5" y2="343.5" stroke="#c8c8c8" stroke-width="1" />
<rect x="1104.9" y="338.0" width="1.6" height="9" fill="#404040"/>
<rect x="1109.5" y="338.0" width="1.6" height="9" fill="#404040"/>
<circle cx="1090.5" cy="342.5" r="1.4" fill="#303030"/>
<line x1="1090.5" y1="342.5" x2="1090.5" y2="350.5" stroke="#7a7a7a" stroke-width="1" />
<line x1="1090.5" y1="350.5" x2="1129.5" y2="350.5" stroke="#7a7a7a" stroke-width="1" />
<text x="1097" y="340" font-size="3.5" fill="#555" text-anchor="start" font-family="Liberation Sans" >C115</text>
<text x="1113" y="340" font-size="3.5" fill="#555" text-anchor="start" font-family="Liberation Sans" >NC</text>
<path d="M1082 358.5 l-2.5 -2.5 h-7 v5 h7z" fill="#fff" stroke="#909090" stroke-width="0.8"/>
<line x1="1082" y1="358.5" x2="1129.5" y2="358.5" stroke="#7a7a7a" stroke-width="1" />
<text x="1041" y="361" font-size="5.2" fill="#3434a0" text-anchor="start" font-family="Liberation Sans"  text-decoration="underline overline" font-weight="bold">XXXXXXXX</text>
<text x="1032" y="361" font-size="3.5" fill="#888" text-anchor="start" font-family="Liberation Sans" >[1]</text>
<circle cx="1107.5" cy="358.5" r="1.4" fill="#303030"/>
<line x1="1107.5" y1="358.5" x2="1107.5" y2="398" stroke="#7a7a7a" stroke-width="1" />
<rect x="1102.5" y="374.9" width="10" height="1.6" fill="#404040"/>
<rect x="1102.5" y="379.5" width="10" height="1.6" fill="#404040"/>
<line x1="1102.5" y1="398.5" x2="1112.5" y2="398.5" stroke="#909090" stroke-width="1" />
<line x1="1104.5" y1="400.5" x2="1110.5" y2="400.5" stroke="#b0b0b0" stroke-width="1" />
<line x1="1106.5" y1="402.5" x2="1108.5" y2="402.5" stroke="#c8c8c8" stroke-width="1" />
<rect x="1095.5" y="366.5" width="18.0" height="31.0" fill="none" stroke="#f6f6cc" stroke-width="1" />
<text x="1097" y="371" font-size="3.5" fill="#555" text-anchor="start" font-family="Liberation Sans" >C122</text>
<text x="1101" y="384" font-size="3.5" fill="#555" text-anchor="start" font-family="Liberation Sans" >NC</text>
<line x1="1170.5" y1="342.5" x2="1223.7" y2="342.5" stroke="#7a7a7a" stroke-width="1" />
<line x1="1224.5" y1="337.5" x2="1224.5" y2="347.5" stroke="#808080" stroke-width="1" />
<line x1="1226.5" y1="339.5" x2="1226.5" y2="345.5" stroke="#b0b0b0" stroke-width="1" />
<line x1="1228.5" y1="341.5" x2="1228.5" y2="343.5" stroke="#c8c8c8" stroke-width="1" />
<rect x="1188.9" y="338.0" width="1.6" height="9" fill="#404040"/>
<rect x="1193.5" y="338.0" width="1.6" height="9" fill="#404040"/>
<circle cx="1208.8" cy="342.5" r="1.4" fill="#303030"/>
<line x1="1208.5" y1="342.5" x2="1208.5" y2="350.5" stroke="#7a7a7a" stroke-width="1" />
<line x1="1170.5" y1="350.5" x2="1208.5" y2="350.5" stroke="#7a7a7a" stroke-width="1" />
<text x="1181" y="340" font-size="3.5" fill="#555" text-anchor="start" font-family="Liberation Sans" >C119</text>
<text x="1196" y="340" font-size="3.5" fill="#555" text-anchor="start" font-family="Liberation Sans" >NC</text>
<line x1="1170.5" y1="358.5" x2="1221" y2="358.5" stroke="#7a7a7a" stroke-width="1" />
<path d="M1221 358.5 l2.5 -2.5 M1221 358.5 l2.5 2.5" stroke="#909090" stroke-width="0.8"/>
<text x="1222" y="361" font-size="5.2" fill="#3434a0" text-anchor="start" font-family="Liberation Sans"  text-decoration="underline overline" font-weight="bold">XXXXXXXX</text>
<circle cx="1190.5" cy="358.5" r="1.4" fill="#303030"/>
<circle cx="1203.2" cy="358.5" r="1.4" fill="#303030"/>
<line x1="1190.5" y1="358.5" x2="1190.5" y2="374.5" stroke="#7a7a7a" stroke-width="1" />
<line x1="1150.5" y1="374.5" x2="1190.5" y2="374.5" stroke="#7a7a7a" stroke-width="1" />
<line x1="1150.5" y1="366.5" x2="1150.5" y2="374.5" stroke="#7a7a7a" stroke-width="1" />
<line x1="1203.5" y1="358.5" x2="1203.5" y2="388" stroke="#7a7a7a" stroke-width="1" />
<rect x="1198.5" y="368.9" width="10" height="1.6" fill="#404040"/>
<rect x="1198.5" y="373.5" width="10" height="1.6" fill="#404040"/>
<line x1="1198.5" y1="388.5" x2="1208.5" y2="388.5" stroke="#909090" stroke-width="1" />
<line x1="1200.5" y1="390.5" x2="1206.5" y2="390.5" stroke="#b0b0b0" stroke-width="1" />
<line x1="1202.5" y1="392.5" x2="1204.5" y2="392.5" stroke="#c8c8c8" stroke-width="1" />
<rect x="1196.5" y="362.5" width="20.0" height="19.0" fill="none" stroke="#f6f6cc" stroke-width="1" />
<text x="1205" y="366" font-size="3.5" fill="#555" text-anchor="start" font-family="Liberation Sans" >C120</text>
<text x="1203" y="379" font-size="3.5" fill="#555" text-anchor="start" font-family="Liberation Sans" >1nF</text>
<text x="1175" y="384" font-size="3.5" fill="#666" text-anchor="start" font-family="Liberation Sans" >IC-RF-SWITCH-RF1347TR13-E6-MC.BS</text>
<rect x="1226.5" y="164.5" width="141.0" height="47.0" fill="none" stroke="#707070" stroke-width="1" />
<line x1="1226.5" y1="171.5" x2="1367.5" y2="171.5" stroke="#707070" stroke-width="1" />
<line x1="1226.5" y1="179.5" x2="1367.5" y2="179.5" stroke="#707070" stroke-width="1" />
<line x1="1226.5" y1="187.5" x2="1367.5" y2="187.5" stroke="#707070" stroke-width="1" />
<line x1="1226.5" y1="195.5" x2="1367.5" y2="195.5" stroke="#707070" stroke-width="1" />
<line x1="1226.5" y1="203.5" x2="1367.5" y2="203.5" stroke="#707070" stroke-width="1" />
<line x1="1251.5" y1="171.5" x2="1251.5" y2="211.5" stroke="#707070" stroke-width="1" />
<line x1="1312.5" y1="171.5" x2="1312.5" y2="211.5" stroke="#707070" stroke-width="1" />
<line x1="1348.5" y1="171.5" x2="1348.5" y2="211.5" stroke="#707070" stroke-width="1" />
<text x="1297" y="169.5" font-size="3.5" fill="#555" text-anchor="middle" font-family="Liberation Sans" >REVISION RECORD</text>
<text x="1239" y="177" font-size="3.5" fill="#555" text-anchor="middle" font-family="Liberation Sans" >ITE</text>
<text x="1281" y="177" font-size="3.5" fill="#555" text-anchor="middle" font-family="Liberation Sans" >ECO NO:</text>
<text x="1330" y="177" font-size="3.5" fill="#555" text-anchor="middle" font-family="Liberation Sans" >APPROVED:</text>
<text x="1357" y="177" font-size="3.5" fill="#555" text-anchor="middle" font-family="Liberation Sans" >DATE</text>
<text x="833" y="669.0" font-size="3.5" fill="#888" text-anchor="start" font-family="Liberation Sans" >[1]</text>
<text x="844" y="669.5" font-size="5.5" fill="#3434a0" text-anchor="start" font-family="Liberation Sans"  text-decoration="underline overline" font-weight="bold">SBG1</text>
<path d="M857 665.0 h5 l3 2.5 l-3 2.5 h-5z" fill="#fff" stroke="#909090" stroke-width="0.8"/>
<line x1="865" y1="667.5" x2="886" y2="667.5" stroke="#7a7a7a" stroke-width="1" />
<polyline points="886,667.5 887.3333333333334,665.0 890.0,670.0 892.6666666666666,665.0 895.3333333333334,670.0 898.0,665.0 900.6666666666666,670.0 902,667.5" fill="none" stroke="#505050" stroke-width="1"/>
<line x1="902" y1="667.5" x2="966" y2="667.5" stroke="#7a7a7a" stroke-width="1" />
<rect x="966.0" y="665.5" width="4" height="4" fill="#101010"/>
<rect x="867.5" y="658.5" width="43.0" height="19.0" fill="none" stroke="#f6f6cc" stroke-width="1" />
<text x="871" y="664.5" font-size="3.5" fill="#555" text-anchor="start" font-family="Liberation Sans" >L100</text>
<text x="902" y="664.5" font-size="3.5" fill="#555" text-anchor="start" font-family="Liberation Sans" >0R</text>
<text x="833" y="694.0" font-size="3.5" fill="#888" text-anchor="start" font-family="Liberation Sans" >[1]</text>
<text x="844" y="694.5" font-size="5.5" fill="#3434a0" text-anchor="start" font-family="Liberation Sans"  text-decoration="underline overline" font-weight="bold">SBG</text>
<path d="M857 690.0 h5 l3 2.5 l-3 2.5 h-5z" fill="#fff" stroke="#909090" stroke-width="0.8"/>
<line x1="865" y1="692.5" x2="886" y2="692.5" stroke="#7a7a7a" stroke-width="1" />
<polyline points="886,692.5 887.3333333333334,690.0 890.0,695.0 892.6666666666666,690.0 895.3333333333334,695.0 898.0,690.0 900.6666666666666,695.0 902,692.5" fill="none" stroke="#505050" stroke-width="1"/>
<line x1="902" y1="692.5" x2="966" y2="692.5" stroke="#7a7a7a" stroke-width="1" />
<rect x="966.0" y="690.5" width="4" height="4" fill="#101010"/>
<rect x="867.5" y="683.5" width="43.0" height="19.0" fill="none" stroke="#f6f6cc" stroke-width="1" />
<text x="871" y="689.5" font-size="3.5" fill="#555" text-anchor="start" font-family="Liberation Sans" >L101</text>
<text x="902" y="689.5" font-size="3.5" fill="#555" text-anchor="start" font-family="Liberation Sans" >0R</text>
<line x1="918.5" y1="667.5" x2="918.5" y2="738" stroke="#7a7a7a" stroke-width="1" />
<circle cx="918" cy="667.5" r="1.4" fill="#303030"/>
<rect x="914.0" y="713.9" width="8" height="1.6" fill="#404040"/>
<rect x="914.0" y="718.5" width="8" height="1.6" fill="#404040"/>
<line x1="913" y1="738.5" x2="923" y2="738.5" stroke="#909090" stroke-width="1" />
<line x1="915" y1="740.5" x2="921" y2="740.5" stroke="#b0b0b0" stroke-width="1" />
<line x1="917" y1="742.5" x2="919" y2="742.5" stroke="#c8c8c8" stroke-width="1" />
<line x1="928.5" y1="692.5" x2="928.5" y2="738" stroke="#7a7a7a" stroke-width="1" />
<circle cx="928" cy="692.5" r="1.4" fill="#303030"/>
<rect x="924.0" y="713.9" width="8" height="1.6" fill="#404040"/>
<rect x="924.0" y="718.5" width="8" height="1.6" fill="#404040"/>
<line x1="923" y1="738.5" x2="933" y2="738.5" stroke="#909090" stroke-width="1" />
<line x1="925" y1="740.5" x2="931" y2="740.5" stroke="#b0b0b0" stroke-width="1" />
<line x1="927" y1="742.5" x2="929" y2="742.5" stroke="#c8c8c8" stroke-width="1" />
<line x1="934.5" y1="667.5" x2="934.5" y2="692.5" stroke="#7a7a7a" stroke-width="1" />
<circle cx="934.5" cy="667.5" r="1.4" fill="#303030"/>
<circle cx="934.5" cy="692.5" r="1.4" fill="#303030"/>
<rect x="929.5" y="676.9" width="10" height="1.6" fill="#404040"/>
<rect x="929.5" y="681.5" width="10" height="1.6" fill="#404040"/>
<text x="940" y="677" font-size="3.5" fill="#555" text-anchor="start" font-family="Liberation Sans" >C112</text>
<text x="940" y="684" font-size="3.5" fill="#555" text-anchor="start" font-family="Liberation Sans" >NC</text>
<line x1="940.5" y1="667.5" x2="940.5" y2="738" stroke="#7a7a7a" stroke-width="1" />
<circle cx="940.5" cy="667.5" r="1.4" fill="#303030"/>
<path d="M937.5 719 h6 l-3 -4z" fill="#303030"/>
<line x1="937.5" y1="714.5" x2="943.5" y2="714.5" stroke="#303030" stroke-width="1" />
<line x1="935.5" y1="738.5" x2="945.5" y2="738.5" stroke="#909090" stroke-width="1" />
<line x1="937.5" y1="740.5" x2="943.5" y2="740.5" stroke="#b0b0b0" stroke-width="1" />
<line x1="939.5" y1="742.5" x2="941.5" y2="742.5" stroke="#c8c8c8" stroke-width="1" />
<line x1="952.5" y1="692.5" x2="952.5" y2="738" stroke="#7a7a7a" stroke-width="1" />
<circle cx="952.5" cy="692.5" r="1.4" fill="#303030"/>
<path d="M949.5 719 h6 l-3 -4z" fill="#303030"/>
<line x1="949.5" y1="714.5" x2="955.5" y2="714.5" stroke="#303030" stroke-width="1" />
<line x1="947.5" y1="738.5" x2="957.5" y2="738.5" stroke="#909090" stroke-width="1" />
<line x1="949.5" y1="740.5" x2="955.5" y2="740.5" stroke="#b0b0b0" stroke-width="1" />
<line x1="951.5" y1="742.5" x2="953.5" y2="742.5" stroke="#c8c8c8" stroke-width="1" />
<rect x="905.5" y="704.5" width="31.0" height="26.0" fill="none" stroke="#f6f6cc" stroke-width="1" />
<rect x="937.5" y="706.5" width="26.0" height="19.0" fill="none" stroke="#f6f6cc" stroke-width="1" />
<text x="908" y="712" font-size="3.2" fill="#555" text-anchor="start" font-family="Liberation Sans" >C105</text>
<text x="918" y="712" font-size="3.2" fill="#555" text-anchor="start" font-family="Liberation Sans" >C106</text>
<text x="907" y="723" font-size="3.2" fill="#555" text-anchor="start" font-family="Liberation Sans" >10pF</text>
<text x="920" y="723" font-size="3.2" fill="#555" text-anchor="start" font-family="Liberation Sans" >10pF</text>
<text x="942" y="712" font-size="3.2" fill="#555" text-anchor="start" font-family="Liberation Sans" >T104</text>
<text x="954" y="712" font-size="3.2" fill="#555" text-anchor="start" font-family="Liberation Sans" >T105</text>
<rect x="958.5" y="649.5" width="35.0" height="37.0" fill="none" stroke="#707070" stroke-width="1" stroke-dasharray="2 2"/>
<text x="964" y="663" font-size="4.5" fill="#333" text-anchor="start" font-family="Liberation Sans" >1.5*2.0</text>
<text x="981" y="670" font-size="7" fill="#333" text-anchor="start" font-family="Liberation Sans" >+</text>
<line x1="983" y1="693.5" x2="990" y2="693.5" stroke="#333" stroke-width="1.2" />
<rect x="960.5" y="684.5" width="20.0" height="19.0" fill="none" stroke="#f6f6cc" stroke-width="1" />
<text x="1156" y="666.0" font-size="3.5" fill="#888" text-anchor="start" font-family="Liberation Sans" >[1]</text>
<text x="1164" y="666.5" font-size="5.5" fill="#3434a0" text-anchor="start" font-family="Liberation Sans"  text-decoration="underline overline" font-weight="bold">XXXX</text>
<path d="M1180 662.0 h5 l3 2.5 l-3 2.5 h-5z" fill="#fff" stroke="#909090" stroke-width="0.8"/>
<text x="1156" y="690.0" font-size="3.5" fill="#888" text-anchor="start" font-family="Liberation Sans" >[1]</text>
<text x="1164" y="690.5" font-size="5.5" fill="#3434a0" text-anchor="start" font-family="Liberation Sans"  text-decoration="underline overline" font-weight="bold">XXXX</text>
<path d="M1180 686.0 h5 l3 2.5 l-3 2.5 h-5z" fill="#fff" stroke="#909090" stroke-width="0.8"/>
<line x1="1188" y1="664.5" x2="1276.5" y2="664.5" stroke="#7a7a7a" stroke-width="1" />
<line x1="1188" y1="688.5" x2="1289" y2="688.5" stroke="#7a7a7a" stroke-width="1" />
<circle cx="1199" cy="664.5" r="1.4" fill="#303030"/>
<polyline points="1199.5,664.5 1199.5,654.5 1225.5,654.5 1225.5,688.5" fill="none" stroke="#7a7a7a" stroke-width="1"/>
<circle cx="1225.5" cy="688.5" r="1.4" fill="#303030"/>
<rect x="1207.9" y="650.0" width="1.6" height="9" fill="#404040"/>
<rect x="1212.5" y="650.0" width="1.6" height="9" fill="#404040"/>
<text x="1202" y="652" font-size="3.5" fill="#555" text-anchor="start" font-family="Liberation Sans" >C726</text>
<text x="1218" y="651" font-size="3.5" fill="#555" text-anchor="start" font-family="Liberation Sans" >100pF</text>
<line x1="1235.5" y1="631" x2="1235.5" y2="664.5" stroke="#7a7a7a" stroke-width="1" />
<line x1="1230.5" y1="629.5" x2="1240.5" y2="629.5" stroke="#909090" stroke-width="1" />
<line x1="1232.5" y1="627.5" x2="1238.5" y2="627.5" stroke="#b0b0b0" stroke-width="1" />
<line x1="1234.5" y1="625.5" x2="1236.5" y2="625.5" stroke="#c8c8c8" stroke-width="1" />
<rect x="1230.5" y="644.9" width="10" height="1.6" fill="#404040"/>
<rect x="1230.5" y="649.5" width="10" height="1.6" fill="#404040"/>
<circle cx="1235.5" cy="664.5" r="1.4" fill="#303030"/>
<text x="1225" y="646" font-size="3.5" fill="#555" text-anchor="start" font-family="Liberation Sans" >C114</text>
<text x="1227" y="658" font-size="3.5" fill="#555" text-anchor="start" font-family="Liberation Sans" >10pF</text>
<line x1="1235.5" y1="688.5" x2="1235.5" y2="725" stroke="#7a7a7a" stroke-width="1" />
<rect x="1230.5" y="701.9" width="10" height="1.6" fill="#404040"/>
<rect x="1230.5" y="706.5" width="10" height="1.6" fill="#404040"/>
<circle cx="1235.5" cy="688.5" r="1.4" fill="#303030"/>
<line x1="1230.5" y1="725.5" x2="1240.5" y2="725.5" stroke="#909090" stroke-width="1" />
<line x1="1232.5" y1="727.5" x2="1238.5" y2="727.5" stroke="#b0b0b0" stroke-width="1" />
<line x1="1234.5" y1="729.5" x2="1236.5" y2="729.5" stroke="#c8c8c8" stroke-width="1" />
<text x="1225" y="699" font-size="3.5" fill="#555" text-anchor="start" font-family="Liberation Sans" >C117</text>
<text x="1227" y="711" font-size="3.5" fill="#555" text-anchor="start" font-family="Liberation Sans" >10pF</text>
<rect x="1243" y="661.5" width="14" height="4" fill="#fff"/>
<path d="M1243.7 664.5 a2.183333333333318 2.183333333333318 0 0 1 4.366666666666636 0 a2.183333333333318 2.183333333333318 0 0 1 4.366666666666636 0 a2.183333333333318 2.183333333333318 0 0 1 4.366666666666636 0" fill="none" stroke="#505050" stroke-width="1"/>
<rect x="1243" y="685.5" width="14" height="4" fill="#fff"/>
<path d="M1243.7 688.5 a2.183333333333318 2.183333333333318 0 0 1 4.366666666666636 0 a2.183333333333318 2.183333333333318 0 0 1 4.366666666666636 0 a2.183333333333318 2.183333333333318 0 0 1 4.366666666666636 0" fill="none" stroke="#505050" stroke-width="1"/>
<rect x="1240.5" y="655.5" width="22.0" height="13.0" fill="none" stroke="#f6f6cc" stroke-width="1" />
<rect x="1240.5" y="679.5" width="22.0" height="13.0" fill="none" stroke="#f6f6cc" stroke-width="1" />
<text x="1245" y="659" font-size="3.5" fill="#555" text-anchor="start" font-family="Liberation Sans" >B100</text>
<text x="1245" y="684" font-size="3.5" fill="#555" text-anchor="start" font-family="Liberation Sans" >B101</text>
<line x1="1264.5" y1="628" x2="1264.5" y2="664.5" stroke="#7a7a7a" stroke-width="1" />
<line x1="1259.5" y1="626.5" x2="1269.5" y2="626.5" stroke="#909090" stroke-width="1" />
<line x1="1261.5" y1="624.5" x2="1267.5" y2="624.5" stroke="#b0b0b0" stroke-width="1" />
<line x1="1263.5" y1="622.5" x2="1265.5" y2="622.5" stroke="#c8c8c8" stroke-width="1" />
<path d="M1261.5 646 h6 l-3 4z" fill="#303030"/>
<line x1="1261.5" y1="650.5" x2="1267.5" y2="650.5" stroke="#303030" stroke-width="1" />
<circle cx="1264.5" cy="664.5" r="1.4" fill="#303030"/>
<text x="1266" y="656" font-size="3.5" fill="#555" text-anchor="start" font-family="Liberation Sans" >T100</text>
<line x1="1275.5" y1="617.5" x2="1275.5" y2="647" stroke="#7a7a7a" stroke-width="1" />
<line x1="1275.5" y1="617.5" x2="1289" y2="617.5" stroke="#7a7a7a" stroke-width="1" />
<circle cx="1289" cy="617.5" r="1.4" fill="#303030"/>
<rect x="1270.5" y="627.9" width="10" height="1.6" fill="#404040"/>
<rect x="1270.5" y="632.5" width="10" height="1.6" fill="#404040"/>
<text x="1278" y="624" font-size="3.5" fill="#555" text-anchor="start" font-family="Liberation Sans" >C107</text>
<text x="1278" y="637" font-size="3.5" fill="#555" text-anchor="start" font-family="Liberation Sans" >100nF</text>
<rect x="1268.5" y="612.5" width="22.0" height="30.0" fill="none" stroke="#f6f6cc" stroke-width="1" />
<line x1="1289.5" y1="609" x2="1289.5" y2="651.5" stroke="#7a7a7a" stroke-width="1" />
<circle cx="1289" cy="606.6" r="2.6" fill="#fff" stroke="#606060" stroke-width="0.9"/>
<text x="1279" y="601" font-size="5.5" fill="#3434a0" text-anchor="start" font-family="Liberation Sans"  text-decoration="underline overline" font-weight="bold">XXXXXX</text>
<rect x="1276.5" y="651.5" width="24.0" height="25.0" fill="none" stroke="#505050" stroke-width="1" />
<circle cx="1295" cy="664" r="3.4" fill="#fff" stroke="#606060" stroke-width="0.9"/>
<text x="1278" y="657" font-size="3" fill="#555" text-anchor="start" font-family="Liberation Sans" >VDD</text>
<text x="1278" y="667" font-size="3" fill="#555" text-anchor="start" font-family="Liberation Sans" >1 OUTPUT</text>
<text x="1278" y="675" font-size="3" fill="#555" text-anchor="start" font-family="Liberation Sans" >GND</text>
<text x="1290" y="675" font-size="3" fill="#555" text-anchor="start" font-family="Liberation Sans" >GND</text>
<line x1="1283.5" y1="676.5" x2="1283.5" y2="688.5" stroke="#7a7a7a" stroke-width="1" />
<line x1="1289.5" y1="676.5" x2="1289.5" y2="695" stroke="#7a7a7a" stroke-width="1" />
<circle cx="1283.5" cy="688.5" r="1.4" fill="#303030"/>
<circle cx="1289" cy="688.5" r="1.4" fill="#303030"/>
<line x1="1284" y1="695.5" x2="1294" y2="695.5" stroke="#909090" stroke-width="1" />
<line x1="1286" y1="697.5" x2="1292" y2="697.5" stroke="#b0b0b0" stroke-width="1" />
<line x1="1288" y1="699.5" x2="1290" y2="699.5" stroke="#c8c8c8" stroke-width="1" />
<rect x="1237.5" y="640.5" width="98.0" height="71.0" fill="none" stroke="#f6f6cc" stroke-width="1" />
<text x="1253" y="709.5" font-size="3.5" fill="#666" text-anchor="start" font-family="Liberation Sans" >MIC-4P8-R6-BF0427-412-02TTEP</text>
<text x="1280" y="645" font-size="3.5" fill="#555" text-anchor="start" font-family="Liberation Sans" >MIC101</text>
<line x1="757.5" y1="773.5" x2="1367.5" y2="773.5" stroke="#707070" stroke-width="1" />
<line x1="757.5" y1="773.5" x2="757.5" y2="836" stroke="#707070" stroke-width="1" />
<line x1="1367.5" y1="773.5" x2="1367.5" y2="836" stroke="#707070" stroke-width="1" />
<line x1="962.5" y1="773.5" x2="962.5" y2="836" stroke="#707070" stroke-width="1" />
<line x1="1169.5" y1="773.5" x2="1169.5" y2="836" stroke="#707070" stroke-width="1" />
<line x1="757.5" y1="802.5" x2="1367.5" y2="802.5" stroke="#707070" stroke-width="1" />
<line x1="757.5" y1="818.5" x2="962.5" y2="818.5" stroke="#707070" stroke-width="1" />
<line x1="805.5" y1="802.5" x2="805.5" y2="836" stroke="#707070" stroke-width="1" />
<line x1="871.5" y1="802.5" x2="871.5" y2="836" stroke="#707070" stroke-width="1" />
<line x1="911.5" y1="802.5" x2="911.5" y2="836" stroke="#707070" stroke-width="1" />
<line x1="1258.5" y1="802.5" x2="1258.5" y2="836" stroke="#707070" stroke-width="1" />
<text x="761" y="779" font-size="3.5" fill="#555" text-anchor="start" font-family="Liberation Sans" >COMPANY:</text>
<text x="0" y="0" font-size="13.5" fill="#111" font-family="Liberation Sans" style="white-space:pre" transform="translate(786.5 786.6) scale(1.0 1)">itel</text>
<text x="0" y="0" font-size="10" fill="#222" font-family="Liberation Sans" style="white-space:pre" transform="translate(968 792.6) scale(0.93 1)">MODEL:</text>
<text x="0" y="0" font-size="12.4" fill="#222" font-family="Liberation Sans" style="white-space:pre" transform="translate(1059 792.6) scale(1.0 1)">H351</text>
<text x="0" y="0" font-size="10" fill="#222" font-family="Liberation Sans" style="white-space:pre" transform="translate(968.5 823) scale(0.96 1)">TITLE:  1.AUDIO_IO_VIB_LED_RF</text>
<text x="0" y="0" font-size="10" fill="#222" font-family="Liberation Sans" style="white-space:pre" transform="translate(1176.5 792.6) scale(1.03 1)">Modified Date:</text>
<text x="0" y="0" font-size="10" fill="#222" font-family="Liberation Sans" style="white-space:pre" transform="translate(1283.5 792.6) scale(1.0 1)">2016-01-25</text>
<text x="0" y="0" font-size="10" fill="#222" font-family="Liberation Sans" style="white-space:pre" transform="translate(1176.5 822.2) scale(0.97 1)">VERSION:  V1.1</text>
<text x="0" y="0" font-size="10" fill="#222" font-family="Liberation Sans" style="white-space:pre" transform="translate(1265 822.2) scale(0.99 1)">SHEET:  1    OF   1</text></svg></div></div>
<div class="a" style="left:0;top:836px;width:1521px;height:23px;background:linear-gradient(#44687c 0px,#45648c 2px,#45668e 18px,#3a6a88 19px,#3a6a88 20px);"></div>
<div class="a" style="left:0;top:856px;width:1521px;height:3px;background:#6cc2e0"></div>
<div class="a tt" style="left:0;top:843px;color:#000">Version:1.0.0.52</div>
<div class="a tt" style="left:1387px;top:843px;color:#fffff4">Current [H351_Sub_SCH]</div>
<div class="a" style="left:1520px;top:31px;width:1px;height:828px;background:#68c8e8"></div>
<div class="a" style="left:0;top:111px;width:1px;height:725px;background:#8d949a"></div>

</body></html>
